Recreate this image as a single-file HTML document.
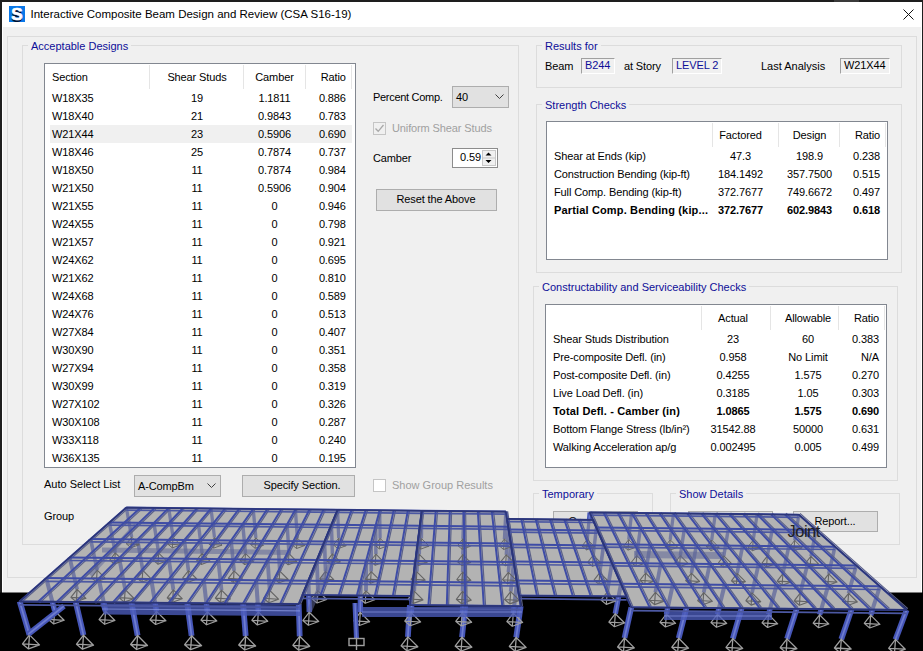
<!DOCTYPE html>
<html><head><meta charset="utf-8"><style>
html,body{margin:0;padding:0;}
body{width:923px;height:651px;position:relative;overflow:hidden;background:#1e1e1e;font-family:"Liberation Sans",sans-serif;font-size:11px;color:#000;}
div{white-space:pre;}
</style></head><body>
<div style="position:absolute;left:834px;top:0px;width:25px;height:2px;box-sizing:border-box;background:#3a3a3a"></div><div style="position:absolute;left:2px;top:2px;width:920px;height:26px;box-sizing:border-box;background:#fff"></div><div style="position:absolute;left:2px;top:27px;width:920px;height:566px;box-sizing:border-box;background:#f0f0f0;border-left:1px solid #fff;border-right:1px solid #fff"></div><div style="position:absolute;left:9px;top:6px;width:16px;height:16px;background:#0a78e8"></div><div style="position:absolute;left:-183.00px;top:5.11px;width:400px;line-height:19px;font-size:17px;letter-spacing:0px;text-align:center;color:#fff;font-weight:bold;text-shadow:0px 1.5px 0 #001030;-webkit-text-stroke:0.7px #fff">S</div><div style="position:absolute;left:30.50px;top:8.27px;width:400px;line-height:13.5px;font-size:11.5px;letter-spacing:0px;text-align:left;color:#000;">Interactive Composite Beam Design and Review (CSA S16-19)</div><svg style="position:absolute;left:903px;top:9px" width="11" height="11"><path d="M0.5 0.5 L10.5 10.5 M10.5 0.5 L0.5 10.5" stroke="#111" stroke-width="1"/></svg><div style="position:absolute;left:7px;top:36px;width:910px;height:542px;box-sizing:border-box;border:1px solid #dcdcdc"></div><div style="position:absolute;left:22px;top:45px;width:497px;height:500px;box-sizing:border-box;border:1px solid #dcdcdc"></div><div style="position:absolute;left:28px;top:39px;height:12px;padding:0 3px;background:#f0f0f0;"></div><div style="position:absolute;left:31.00px;top:39.69px;width:400px;line-height:13px;font-size:11px;letter-spacing:0px;text-align:left;color:#0e0e98;background:#f0f0f0;width:auto;padding-right:3px;margin-left:-2px;padding-left:2px">Acceptable Designs</div><div style="position:absolute;left:44px;top:63px;width:312px;height:405px;box-sizing:border-box;border:1px solid #828790;background:#fff"></div><div style="position:absolute;left:149px;top:65px;width:1px;height:24px;background:#e5e5e5"></div><div style="position:absolute;left:243px;top:65px;width:1px;height:24px;background:#e5e5e5"></div><div style="position:absolute;left:305px;top:65px;width:1px;height:24px;background:#e5e5e5"></div><div style="position:absolute;left:351px;top:65px;width:1px;height:24px;background:#e5e5e5"></div><div style="position:absolute;left:52.00px;top:70.69px;width:400px;line-height:13px;font-size:11px;letter-spacing:-0.12px;text-align:left;color:#000;">Section</div><div style="position:absolute;left:-3.00px;top:70.69px;width:400px;line-height:13px;font-size:11px;letter-spacing:-0.12px;text-align:center;color:#000;">Shear Studs</div><div style="position:absolute;left:74.50px;top:70.69px;width:400px;line-height:13px;font-size:11px;letter-spacing:-0.12px;text-align:center;color:#000;">Camber</div><div style="position:absolute;left:-54.20px;top:70.69px;width:400px;line-height:13px;font-size:11px;letter-spacing:-0.12px;text-align:right;color:#000;">Ratio</div><div style="position:absolute;left:50px;top:125px;width:302px;height:18px;box-sizing:border-box;background:#f0f0f0"></div><div style="position:absolute;left:52.00px;top:91.69px;width:400px;line-height:13px;font-size:11px;letter-spacing:-0.12px;text-align:left;color:#000;">W18X35</div><div style="position:absolute;left:-3.00px;top:91.69px;width:400px;line-height:13px;font-size:11px;letter-spacing:-0.12px;text-align:center;color:#000;">19</div><div style="position:absolute;left:74.50px;top:91.69px;width:400px;line-height:13px;font-size:11px;letter-spacing:-0.12px;text-align:center;color:#000;">1.1811</div><div style="position:absolute;left:-54.20px;top:91.69px;width:400px;line-height:13px;font-size:11px;letter-spacing:-0.12px;text-align:right;color:#000;">0.886</div><div style="position:absolute;left:52.00px;top:109.69px;width:400px;line-height:13px;font-size:11px;letter-spacing:-0.12px;text-align:left;color:#000;">W18X40</div><div style="position:absolute;left:-3.00px;top:109.69px;width:400px;line-height:13px;font-size:11px;letter-spacing:-0.12px;text-align:center;color:#000;">21</div><div style="position:absolute;left:74.50px;top:109.69px;width:400px;line-height:13px;font-size:11px;letter-spacing:-0.12px;text-align:center;color:#000;">0.9843</div><div style="position:absolute;left:-54.20px;top:109.69px;width:400px;line-height:13px;font-size:11px;letter-spacing:-0.12px;text-align:right;color:#000;">0.783</div><div style="position:absolute;left:52.00px;top:127.69px;width:400px;line-height:13px;font-size:11px;letter-spacing:-0.12px;text-align:left;color:#000;">W21X44</div><div style="position:absolute;left:-3.00px;top:127.69px;width:400px;line-height:13px;font-size:11px;letter-spacing:-0.12px;text-align:center;color:#000;">23</div><div style="position:absolute;left:74.50px;top:127.69px;width:400px;line-height:13px;font-size:11px;letter-spacing:-0.12px;text-align:center;color:#000;">0.5906</div><div style="position:absolute;left:-54.20px;top:127.69px;width:400px;line-height:13px;font-size:11px;letter-spacing:-0.12px;text-align:right;color:#000;">0.690</div><div style="position:absolute;left:52.00px;top:145.69px;width:400px;line-height:13px;font-size:11px;letter-spacing:-0.12px;text-align:left;color:#000;">W18X46</div><div style="position:absolute;left:-3.00px;top:145.69px;width:400px;line-height:13px;font-size:11px;letter-spacing:-0.12px;text-align:center;color:#000;">25</div><div style="position:absolute;left:74.50px;top:145.69px;width:400px;line-height:13px;font-size:11px;letter-spacing:-0.12px;text-align:center;color:#000;">0.7874</div><div style="position:absolute;left:-54.20px;top:145.69px;width:400px;line-height:13px;font-size:11px;letter-spacing:-0.12px;text-align:right;color:#000;">0.737</div><div style="position:absolute;left:52.00px;top:163.69px;width:400px;line-height:13px;font-size:11px;letter-spacing:-0.12px;text-align:left;color:#000;">W18X50</div><div style="position:absolute;left:-3.00px;top:163.69px;width:400px;line-height:13px;font-size:11px;letter-spacing:-0.12px;text-align:center;color:#000;">11</div><div style="position:absolute;left:74.50px;top:163.69px;width:400px;line-height:13px;font-size:11px;letter-spacing:-0.12px;text-align:center;color:#000;">0.7874</div><div style="position:absolute;left:-54.20px;top:163.69px;width:400px;line-height:13px;font-size:11px;letter-spacing:-0.12px;text-align:right;color:#000;">0.984</div><div style="position:absolute;left:52.00px;top:181.69px;width:400px;line-height:13px;font-size:11px;letter-spacing:-0.12px;text-align:left;color:#000;">W21X50</div><div style="position:absolute;left:-3.00px;top:181.69px;width:400px;line-height:13px;font-size:11px;letter-spacing:-0.12px;text-align:center;color:#000;">11</div><div style="position:absolute;left:74.50px;top:181.69px;width:400px;line-height:13px;font-size:11px;letter-spacing:-0.12px;text-align:center;color:#000;">0.5906</div><div style="position:absolute;left:-54.20px;top:181.69px;width:400px;line-height:13px;font-size:11px;letter-spacing:-0.12px;text-align:right;color:#000;">0.904</div><div style="position:absolute;left:52.00px;top:199.69px;width:400px;line-height:13px;font-size:11px;letter-spacing:-0.12px;text-align:left;color:#000;">W21X55</div><div style="position:absolute;left:-3.00px;top:199.69px;width:400px;line-height:13px;font-size:11px;letter-spacing:-0.12px;text-align:center;color:#000;">11</div><div style="position:absolute;left:74.50px;top:199.69px;width:400px;line-height:13px;font-size:11px;letter-spacing:-0.12px;text-align:center;color:#000;">0</div><div style="position:absolute;left:-54.20px;top:199.69px;width:400px;line-height:13px;font-size:11px;letter-spacing:-0.12px;text-align:right;color:#000;">0.946</div><div style="position:absolute;left:52.00px;top:217.69px;width:400px;line-height:13px;font-size:11px;letter-spacing:-0.12px;text-align:left;color:#000;">W24X55</div><div style="position:absolute;left:-3.00px;top:217.69px;width:400px;line-height:13px;font-size:11px;letter-spacing:-0.12px;text-align:center;color:#000;">11</div><div style="position:absolute;left:74.50px;top:217.69px;width:400px;line-height:13px;font-size:11px;letter-spacing:-0.12px;text-align:center;color:#000;">0</div><div style="position:absolute;left:-54.20px;top:217.69px;width:400px;line-height:13px;font-size:11px;letter-spacing:-0.12px;text-align:right;color:#000;">0.798</div><div style="position:absolute;left:52.00px;top:235.69px;width:400px;line-height:13px;font-size:11px;letter-spacing:-0.12px;text-align:left;color:#000;">W21X57</div><div style="position:absolute;left:-3.00px;top:235.69px;width:400px;line-height:13px;font-size:11px;letter-spacing:-0.12px;text-align:center;color:#000;">11</div><div style="position:absolute;left:74.50px;top:235.69px;width:400px;line-height:13px;font-size:11px;letter-spacing:-0.12px;text-align:center;color:#000;">0</div><div style="position:absolute;left:-54.20px;top:235.69px;width:400px;line-height:13px;font-size:11px;letter-spacing:-0.12px;text-align:right;color:#000;">0.921</div><div style="position:absolute;left:52.00px;top:253.69px;width:400px;line-height:13px;font-size:11px;letter-spacing:-0.12px;text-align:left;color:#000;">W24X62</div><div style="position:absolute;left:-3.00px;top:253.69px;width:400px;line-height:13px;font-size:11px;letter-spacing:-0.12px;text-align:center;color:#000;">11</div><div style="position:absolute;left:74.50px;top:253.69px;width:400px;line-height:13px;font-size:11px;letter-spacing:-0.12px;text-align:center;color:#000;">0</div><div style="position:absolute;left:-54.20px;top:253.69px;width:400px;line-height:13px;font-size:11px;letter-spacing:-0.12px;text-align:right;color:#000;">0.695</div><div style="position:absolute;left:52.00px;top:271.69px;width:400px;line-height:13px;font-size:11px;letter-spacing:-0.12px;text-align:left;color:#000;">W21X62</div><div style="position:absolute;left:-3.00px;top:271.69px;width:400px;line-height:13px;font-size:11px;letter-spacing:-0.12px;text-align:center;color:#000;">11</div><div style="position:absolute;left:74.50px;top:271.69px;width:400px;line-height:13px;font-size:11px;letter-spacing:-0.12px;text-align:center;color:#000;">0</div><div style="position:absolute;left:-54.20px;top:271.69px;width:400px;line-height:13px;font-size:11px;letter-spacing:-0.12px;text-align:right;color:#000;">0.810</div><div style="position:absolute;left:52.00px;top:289.69px;width:400px;line-height:13px;font-size:11px;letter-spacing:-0.12px;text-align:left;color:#000;">W24X68</div><div style="position:absolute;left:-3.00px;top:289.69px;width:400px;line-height:13px;font-size:11px;letter-spacing:-0.12px;text-align:center;color:#000;">11</div><div style="position:absolute;left:74.50px;top:289.69px;width:400px;line-height:13px;font-size:11px;letter-spacing:-0.12px;text-align:center;color:#000;">0</div><div style="position:absolute;left:-54.20px;top:289.69px;width:400px;line-height:13px;font-size:11px;letter-spacing:-0.12px;text-align:right;color:#000;">0.589</div><div style="position:absolute;left:52.00px;top:307.69px;width:400px;line-height:13px;font-size:11px;letter-spacing:-0.12px;text-align:left;color:#000;">W24X76</div><div style="position:absolute;left:-3.00px;top:307.69px;width:400px;line-height:13px;font-size:11px;letter-spacing:-0.12px;text-align:center;color:#000;">11</div><div style="position:absolute;left:74.50px;top:307.69px;width:400px;line-height:13px;font-size:11px;letter-spacing:-0.12px;text-align:center;color:#000;">0</div><div style="position:absolute;left:-54.20px;top:307.69px;width:400px;line-height:13px;font-size:11px;letter-spacing:-0.12px;text-align:right;color:#000;">0.513</div><div style="position:absolute;left:52.00px;top:325.69px;width:400px;line-height:13px;font-size:11px;letter-spacing:-0.12px;text-align:left;color:#000;">W27X84</div><div style="position:absolute;left:-3.00px;top:325.69px;width:400px;line-height:13px;font-size:11px;letter-spacing:-0.12px;text-align:center;color:#000;">11</div><div style="position:absolute;left:74.50px;top:325.69px;width:400px;line-height:13px;font-size:11px;letter-spacing:-0.12px;text-align:center;color:#000;">0</div><div style="position:absolute;left:-54.20px;top:325.69px;width:400px;line-height:13px;font-size:11px;letter-spacing:-0.12px;text-align:right;color:#000;">0.407</div><div style="position:absolute;left:52.00px;top:343.69px;width:400px;line-height:13px;font-size:11px;letter-spacing:-0.12px;text-align:left;color:#000;">W30X90</div><div style="position:absolute;left:-3.00px;top:343.69px;width:400px;line-height:13px;font-size:11px;letter-spacing:-0.12px;text-align:center;color:#000;">11</div><div style="position:absolute;left:74.50px;top:343.69px;width:400px;line-height:13px;font-size:11px;letter-spacing:-0.12px;text-align:center;color:#000;">0</div><div style="position:absolute;left:-54.20px;top:343.69px;width:400px;line-height:13px;font-size:11px;letter-spacing:-0.12px;text-align:right;color:#000;">0.351</div><div style="position:absolute;left:52.00px;top:361.69px;width:400px;line-height:13px;font-size:11px;letter-spacing:-0.12px;text-align:left;color:#000;">W27X94</div><div style="position:absolute;left:-3.00px;top:361.69px;width:400px;line-height:13px;font-size:11px;letter-spacing:-0.12px;text-align:center;color:#000;">11</div><div style="position:absolute;left:74.50px;top:361.69px;width:400px;line-height:13px;font-size:11px;letter-spacing:-0.12px;text-align:center;color:#000;">0</div><div style="position:absolute;left:-54.20px;top:361.69px;width:400px;line-height:13px;font-size:11px;letter-spacing:-0.12px;text-align:right;color:#000;">0.358</div><div style="position:absolute;left:52.00px;top:379.69px;width:400px;line-height:13px;font-size:11px;letter-spacing:-0.12px;text-align:left;color:#000;">W30X99</div><div style="position:absolute;left:-3.00px;top:379.69px;width:400px;line-height:13px;font-size:11px;letter-spacing:-0.12px;text-align:center;color:#000;">11</div><div style="position:absolute;left:74.50px;top:379.69px;width:400px;line-height:13px;font-size:11px;letter-spacing:-0.12px;text-align:center;color:#000;">0</div><div style="position:absolute;left:-54.20px;top:379.69px;width:400px;line-height:13px;font-size:11px;letter-spacing:-0.12px;text-align:right;color:#000;">0.319</div><div style="position:absolute;left:52.00px;top:397.69px;width:400px;line-height:13px;font-size:11px;letter-spacing:-0.12px;text-align:left;color:#000;">W27X102</div><div style="position:absolute;left:-3.00px;top:397.69px;width:400px;line-height:13px;font-size:11px;letter-spacing:-0.12px;text-align:center;color:#000;">11</div><div style="position:absolute;left:74.50px;top:397.69px;width:400px;line-height:13px;font-size:11px;letter-spacing:-0.12px;text-align:center;color:#000;">0</div><div style="position:absolute;left:-54.20px;top:397.69px;width:400px;line-height:13px;font-size:11px;letter-spacing:-0.12px;text-align:right;color:#000;">0.326</div><div style="position:absolute;left:52.00px;top:415.69px;width:400px;line-height:13px;font-size:11px;letter-spacing:-0.12px;text-align:left;color:#000;">W30X108</div><div style="position:absolute;left:-3.00px;top:415.69px;width:400px;line-height:13px;font-size:11px;letter-spacing:-0.12px;text-align:center;color:#000;">11</div><div style="position:absolute;left:74.50px;top:415.69px;width:400px;line-height:13px;font-size:11px;letter-spacing:-0.12px;text-align:center;color:#000;">0</div><div style="position:absolute;left:-54.20px;top:415.69px;width:400px;line-height:13px;font-size:11px;letter-spacing:-0.12px;text-align:right;color:#000;">0.287</div><div style="position:absolute;left:52.00px;top:433.69px;width:400px;line-height:13px;font-size:11px;letter-spacing:-0.12px;text-align:left;color:#000;">W33X118</div><div style="position:absolute;left:-3.00px;top:433.69px;width:400px;line-height:13px;font-size:11px;letter-spacing:-0.12px;text-align:center;color:#000;">11</div><div style="position:absolute;left:74.50px;top:433.69px;width:400px;line-height:13px;font-size:11px;letter-spacing:-0.12px;text-align:center;color:#000;">0</div><div style="position:absolute;left:-54.20px;top:433.69px;width:400px;line-height:13px;font-size:11px;letter-spacing:-0.12px;text-align:right;color:#000;">0.240</div><div style="position:absolute;left:52.00px;top:451.69px;width:400px;line-height:13px;font-size:11px;letter-spacing:-0.12px;text-align:left;color:#000;">W36X135</div><div style="position:absolute;left:-3.00px;top:451.69px;width:400px;line-height:13px;font-size:11px;letter-spacing:-0.12px;text-align:center;color:#000;">11</div><div style="position:absolute;left:74.50px;top:451.69px;width:400px;line-height:13px;font-size:11px;letter-spacing:-0.12px;text-align:center;color:#000;">0</div><div style="position:absolute;left:-54.20px;top:451.69px;width:400px;line-height:13px;font-size:11px;letter-spacing:-0.12px;text-align:right;color:#000;">0.195</div><div style="position:absolute;left:373.00px;top:90.69px;width:400px;line-height:13px;font-size:11px;letter-spacing:-0.3px;text-align:left;color:#000;">Percent Comp.</div><div style="position:absolute;left:452px;top:86px;width:57px;height:22px;box-sizing:border-box;border:1px solid #adadad;background:#e1e1e1"></div><div style="position:absolute;left:456.00px;top:90.69px;width:400px;line-height:13px;font-size:11px;letter-spacing:-0.12px;text-align:left;color:#000;">40</div><svg style="position:absolute;left:494.5px;top:94.0px" width="10" height="6"><path d="M0.5 0.5 L4.5 4.5 L8.5 0.5" fill="none" stroke="#404040" stroke-width="1"/></svg><div style="position:absolute;left:373px;top:122px;width:13px;height:13px;box-sizing:border-box;border:1px solid #c5c5c5;background:#f0f0f0"></div><svg style="position:absolute;left:373px;top:122px" width="13" height="13"><path d="M2.5 6.5 L5.2 9.3 L10.5 3" fill="none" stroke="#a8a8a8" stroke-width="1.3"/></svg><div style="position:absolute;left:392.00px;top:121.69px;width:400px;line-height:13px;font-size:11px;letter-spacing:-0.12px;text-align:left;color:#a0a0a0;">Uniform Shear Studs</div><div style="position:absolute;left:373.00px;top:151.69px;width:400px;line-height:13px;font-size:11px;letter-spacing:-0.12px;text-align:left;color:#000;">Camber</div><div style="position:absolute;left:452px;top:148px;width:46px;height:20px;box-sizing:border-box;border:1px solid #8c8c8c;background:#fff"></div><div style="position:absolute;left:81.00px;top:151.19px;width:400px;line-height:13px;font-size:11px;letter-spacing:-0.12px;text-align:right;color:#000;">0.59</div><div style="position:absolute;left:482px;top:150px;width:14px;height:16px;box-sizing:border-box;border:1px solid #c8c8c8;background:#f0f0f0"></div><svg style="position:absolute;left:482px;top:150px" width="14" height="16"><path d="M3.5 5.5 L6.5 2.5 L9.5 5.5 Z M3.5 10 L6.5 13 L9.5 10 Z" fill="#000"/><path d="M1 8 L13 8" stroke="#c8c8c8"/></svg><div style="position:absolute;left:376px;top:189px;width:121px;height:22px;box-sizing:border-box;border:1px solid #adadad;background:#e1e1e1"></div><div style="position:absolute;left:236.00px;top:193.19px;width:400px;line-height:13px;font-size:11px;letter-spacing:-0.12px;text-align:center;color:#000;">Reset the Above</div><div style="position:absolute;left:44.00px;top:477.69px;width:400px;line-height:13px;font-size:11px;letter-spacing:0px;text-align:left;color:#000;">Auto Select List</div><div style="position:absolute;left:134px;top:475px;width:87px;height:22px;box-sizing:border-box;border:1px solid #adadad;background:#e1e1e1"></div><div style="position:absolute;left:138.00px;top:479.69px;width:400px;line-height:13px;font-size:11px;letter-spacing:-0.12px;text-align:left;color:#000;">A-CompBm</div><svg style="position:absolute;left:206.5px;top:483.0px" width="10" height="6"><path d="M0.5 0.5 L4.5 4.5 L8.5 0.5" fill="none" stroke="#404040" stroke-width="1"/></svg><div style="position:absolute;left:242px;top:475px;width:113px;height:22px;box-sizing:border-box;border:1px solid #adadad;background:#e1e1e1"></div><div style="position:absolute;left:102.00px;top:479.19px;width:400px;line-height:13px;font-size:11px;letter-spacing:-0.12px;text-align:center;color:#000;">Specify Section.</div><div style="position:absolute;left:373px;top:479px;width:13px;height:13px;box-sizing:border-box;border:1px solid #c5c5c5;background:#fff"></div><div style="position:absolute;left:392.00px;top:478.69px;width:400px;line-height:13px;font-size:11px;letter-spacing:0px;text-align:left;color:#a0a0a0;">Show Group Results</div><div style="position:absolute;left:44.00px;top:509.69px;width:400px;line-height:13px;font-size:11px;letter-spacing:-0.12px;text-align:left;color:#000;">Group</div><div style="position:absolute;left:536px;top:45px;width:366px;height:43px;box-sizing:border-box;border:1px solid #dcdcdc"></div><div style="position:absolute;left:542px;top:39px;height:12px;padding:0 3px;background:#f0f0f0;"></div><div style="position:absolute;left:545.00px;top:39.69px;width:400px;line-height:13px;font-size:11px;letter-spacing:0px;text-align:left;color:#0e0e98;background:#f0f0f0;width:auto;padding-right:3px;margin-left:-2px;padding-left:2px">Results for</div><div style="position:absolute;left:545.00px;top:59.69px;width:400px;line-height:13px;font-size:11px;letter-spacing:-0.12px;text-align:left;color:#000;">Beam</div><div style="position:absolute;left:581px;top:58px;width:34px;height:16px;box-sizing:border-box;border-top:1px solid #a0a0a0;border-left:1px solid #a0a0a0;border-right:1px solid #fff;border-bottom:1px solid #fff;background:#f0f0f0"></div><div style="position:absolute;left:585.00px;top:58.69px;width:400px;line-height:13px;font-size:11px;letter-spacing:-0.12px;text-align:left;color:#0e0e98;">B244</div><div style="position:absolute;left:624.00px;top:59.69px;width:400px;line-height:13px;font-size:11px;letter-spacing:-0.12px;text-align:left;color:#000;">at Story</div><div style="position:absolute;left:672px;top:58px;width:50px;height:16px;box-sizing:border-box;border-top:1px solid #a0a0a0;border-left:1px solid #a0a0a0;border-right:1px solid #fff;border-bottom:1px solid #fff;background:#f0f0f0"></div><div style="position:absolute;left:676.00px;top:58.69px;width:400px;line-height:13px;font-size:11px;letter-spacing:-0.12px;text-align:left;color:#0e0e98;">LEVEL 2</div><div style="position:absolute;left:761.00px;top:59.69px;width:400px;line-height:13px;font-size:11px;letter-spacing:0px;text-align:left;color:#000;">Last Analysis</div><div style="position:absolute;left:840px;top:58px;width:50px;height:16px;box-sizing:border-box;border-top:1px solid #a0a0a0;border-left:1px solid #a0a0a0;border-right:1px solid #fff;border-bottom:1px solid #fff;background:#f0f0f0"></div><div style="position:absolute;left:844.00px;top:58.69px;width:400px;line-height:13px;font-size:11px;letter-spacing:-0.12px;text-align:left;color:#000;">W21X44</div><div style="position:absolute;left:536px;top:104px;width:366px;height:169px;box-sizing:border-box;border:1px solid #dcdcdc"></div><div style="position:absolute;left:542px;top:98px;height:12px;padding:0 3px;background:#f0f0f0;"></div><div style="position:absolute;left:545.00px;top:98.69px;width:400px;line-height:13px;font-size:11px;letter-spacing:0px;text-align:left;color:#0e0e98;background:#f0f0f0;width:auto;padding-right:3px;margin-left:-2px;padding-left:2px">Strength Checks</div><div style="position:absolute;left:546px;top:121px;width:342px;height:139px;box-sizing:border-box;border:1px solid #828790;background:#fff"></div><div style="position:absolute;left:712px;top:123px;width:1px;height:24px;background:#e5e5e5"></div><div style="position:absolute;left:778px;top:123px;width:1px;height:24px;background:#e5e5e5"></div><div style="position:absolute;left:839px;top:123px;width:1px;height:24px;background:#e5e5e5"></div><div style="position:absolute;left:885px;top:123px;width:1px;height:24px;background:#e5e5e5"></div><div style="position:absolute;left:540.50px;top:128.69px;width:400px;line-height:13px;font-size:11px;letter-spacing:-0.12px;text-align:center;color:#000;">Factored</div><div style="position:absolute;left:609.50px;top:128.69px;width:400px;line-height:13px;font-size:11px;letter-spacing:-0.12px;text-align:center;color:#000;">Design</div><div style="position:absolute;left:480.00px;top:128.69px;width:400px;line-height:13px;font-size:11px;letter-spacing:-0.12px;text-align:right;color:#000;">Ratio</div><div style="position:absolute;left:554.00px;top:149.69px;width:400px;line-height:13px;font-size:11px;letter-spacing:-0.12px;text-align:left;color:#000;">Shear at Ends (kip)</div><div style="position:absolute;left:540.50px;top:149.69px;width:400px;line-height:13px;font-size:11px;letter-spacing:-0.12px;text-align:center;color:#000;">47.3</div><div style="position:absolute;left:609.50px;top:149.69px;width:400px;line-height:13px;font-size:11px;letter-spacing:-0.12px;text-align:center;color:#000;">198.9</div><div style="position:absolute;left:480.00px;top:149.69px;width:400px;line-height:13px;font-size:11px;letter-spacing:-0.12px;text-align:right;color:#000;">0.238</div><div style="position:absolute;left:554.00px;top:167.69px;width:400px;line-height:13px;font-size:11px;letter-spacing:-0.12px;text-align:left;color:#000;">Construction Bending (kip-ft)</div><div style="position:absolute;left:540.50px;top:167.69px;width:400px;line-height:13px;font-size:11px;letter-spacing:-0.12px;text-align:center;color:#000;">184.1492</div><div style="position:absolute;left:609.50px;top:167.69px;width:400px;line-height:13px;font-size:11px;letter-spacing:-0.12px;text-align:center;color:#000;">357.7500</div><div style="position:absolute;left:480.00px;top:167.69px;width:400px;line-height:13px;font-size:11px;letter-spacing:-0.12px;text-align:right;color:#000;">0.515</div><div style="position:absolute;left:554.00px;top:185.69px;width:400px;line-height:13px;font-size:11px;letter-spacing:-0.12px;text-align:left;color:#000;">Full Comp. Bending (kip-ft)</div><div style="position:absolute;left:540.50px;top:185.69px;width:400px;line-height:13px;font-size:11px;letter-spacing:-0.12px;text-align:center;color:#000;">372.7677</div><div style="position:absolute;left:609.50px;top:185.69px;width:400px;line-height:13px;font-size:11px;letter-spacing:-0.12px;text-align:center;color:#000;">749.6672</div><div style="position:absolute;left:480.00px;top:185.69px;width:400px;line-height:13px;font-size:11px;letter-spacing:-0.12px;text-align:right;color:#000;">0.497</div><div style="position:absolute;left:554.00px;top:203.69px;width:400px;line-height:13px;font-size:11px;letter-spacing:0.15px;text-align:left;color:#000;font-weight:bold;">Partial Comp. Bending (kip...</div><div style="position:absolute;left:540.50px;top:203.69px;width:400px;line-height:13px;font-size:11px;letter-spacing:-0.12px;text-align:center;color:#000;font-weight:bold;">372.7677</div><div style="position:absolute;left:609.50px;top:203.69px;width:400px;line-height:13px;font-size:11px;letter-spacing:-0.12px;text-align:center;color:#000;font-weight:bold;">602.9843</div><div style="position:absolute;left:480.00px;top:203.69px;width:400px;line-height:13px;font-size:11px;letter-spacing:-0.12px;text-align:right;color:#000;font-weight:bold;">0.618</div><div style="position:absolute;left:533px;top:286px;width:365px;height:195px;box-sizing:border-box;border:1px solid #dcdcdc"></div><div style="position:absolute;left:539px;top:280px;height:12px;padding:0 3px;background:#f0f0f0;"></div><div style="position:absolute;left:542.00px;top:280.69px;width:400px;line-height:13px;font-size:11px;letter-spacing:0px;text-align:left;color:#0e0e98;background:#f0f0f0;width:auto;padding-right:3px;margin-left:-2px;padding-left:2px">Constructability and Serviceability Checks</div><div style="position:absolute;left:545px;top:304px;width:342px;height:164px;box-sizing:border-box;border:1px solid #828790;background:#fff"></div><div style="position:absolute;left:701px;top:306px;width:1px;height:24px;background:#e5e5e5"></div><div style="position:absolute;left:770px;top:306px;width:1px;height:24px;background:#e5e5e5"></div><div style="position:absolute;left:838px;top:306px;width:1px;height:24px;background:#e5e5e5"></div><div style="position:absolute;left:884px;top:306px;width:1px;height:24px;background:#e5e5e5"></div><div style="position:absolute;left:533.00px;top:311.69px;width:400px;line-height:13px;font-size:11px;letter-spacing:-0.12px;text-align:center;color:#000;">Actual</div><div style="position:absolute;left:608.00px;top:311.69px;width:400px;line-height:13px;font-size:11px;letter-spacing:-0.12px;text-align:center;color:#000;">Allowable</div><div style="position:absolute;left:479.00px;top:311.69px;width:400px;line-height:13px;font-size:11px;letter-spacing:-0.12px;text-align:right;color:#000;">Ratio</div><div style="position:absolute;left:553.00px;top:332.69px;width:400px;line-height:13px;font-size:11px;letter-spacing:-0.12px;text-align:left;color:#000;">Shear Studs Distribution</div><div style="position:absolute;left:533.00px;top:332.69px;width:400px;line-height:13px;font-size:11px;letter-spacing:-0.12px;text-align:center;color:#000;">23</div><div style="position:absolute;left:608.00px;top:332.69px;width:400px;line-height:13px;font-size:11px;letter-spacing:-0.12px;text-align:center;color:#000;">60</div><div style="position:absolute;left:479.00px;top:332.69px;width:400px;line-height:13px;font-size:11px;letter-spacing:-0.12px;text-align:right;color:#000;">0.383</div><div style="position:absolute;left:553.00px;top:350.69px;width:400px;line-height:13px;font-size:11px;letter-spacing:-0.12px;text-align:left;color:#000;">Pre-composite Defl. (in)</div><div style="position:absolute;left:533.00px;top:350.69px;width:400px;line-height:13px;font-size:11px;letter-spacing:-0.12px;text-align:center;color:#000;">0.958</div><div style="position:absolute;left:608.00px;top:350.69px;width:400px;line-height:13px;font-size:11px;letter-spacing:-0.12px;text-align:center;color:#000;">No Limit</div><div style="position:absolute;left:479.00px;top:350.69px;width:400px;line-height:13px;font-size:11px;letter-spacing:-0.12px;text-align:right;color:#000;">N/A</div><div style="position:absolute;left:553.00px;top:368.69px;width:400px;line-height:13px;font-size:11px;letter-spacing:-0.12px;text-align:left;color:#000;">Post-composite Defl. (in)</div><div style="position:absolute;left:533.00px;top:368.69px;width:400px;line-height:13px;font-size:11px;letter-spacing:-0.12px;text-align:center;color:#000;">0.4255</div><div style="position:absolute;left:608.00px;top:368.69px;width:400px;line-height:13px;font-size:11px;letter-spacing:-0.12px;text-align:center;color:#000;">1.575</div><div style="position:absolute;left:479.00px;top:368.69px;width:400px;line-height:13px;font-size:11px;letter-spacing:-0.12px;text-align:right;color:#000;">0.270</div><div style="position:absolute;left:553.00px;top:386.69px;width:400px;line-height:13px;font-size:11px;letter-spacing:-0.12px;text-align:left;color:#000;">Live Load Defl. (in)</div><div style="position:absolute;left:533.00px;top:386.69px;width:400px;line-height:13px;font-size:11px;letter-spacing:-0.12px;text-align:center;color:#000;">0.3185</div><div style="position:absolute;left:608.00px;top:386.69px;width:400px;line-height:13px;font-size:11px;letter-spacing:-0.12px;text-align:center;color:#000;">1.05</div><div style="position:absolute;left:479.00px;top:386.69px;width:400px;line-height:13px;font-size:11px;letter-spacing:-0.12px;text-align:right;color:#000;">0.303</div><div style="position:absolute;left:553.00px;top:404.69px;width:400px;line-height:13px;font-size:11px;letter-spacing:0.15px;text-align:left;color:#000;font-weight:bold;">Total Defl. - Camber (in)</div><div style="position:absolute;left:533.00px;top:404.69px;width:400px;line-height:13px;font-size:11px;letter-spacing:-0.12px;text-align:center;color:#000;font-weight:bold;">1.0865</div><div style="position:absolute;left:608.00px;top:404.69px;width:400px;line-height:13px;font-size:11px;letter-spacing:-0.12px;text-align:center;color:#000;font-weight:bold;">1.575</div><div style="position:absolute;left:479.00px;top:404.69px;width:400px;line-height:13px;font-size:11px;letter-spacing:-0.12px;text-align:right;color:#000;font-weight:bold;">0.690</div><div style="position:absolute;left:553.00px;top:422.69px;width:400px;line-height:13px;font-size:11px;letter-spacing:-0.12px;text-align:left;color:#000;">Bottom Flange Stress (lb/in&sup2;)</div><div style="position:absolute;left:533.00px;top:422.69px;width:400px;line-height:13px;font-size:11px;letter-spacing:-0.12px;text-align:center;color:#000;">31542.88</div><div style="position:absolute;left:608.00px;top:422.69px;width:400px;line-height:13px;font-size:11px;letter-spacing:-0.12px;text-align:center;color:#000;">50000</div><div style="position:absolute;left:479.00px;top:422.69px;width:400px;line-height:13px;font-size:11px;letter-spacing:-0.12px;text-align:right;color:#000;">0.631</div><div style="position:absolute;left:553.00px;top:440.69px;width:400px;line-height:13px;font-size:11px;letter-spacing:-0.12px;text-align:left;color:#000;">Walking Acceleration ap/g</div><div style="position:absolute;left:533.00px;top:440.69px;width:400px;line-height:13px;font-size:11px;letter-spacing:-0.12px;text-align:center;color:#000;">0.002495</div><div style="position:absolute;left:608.00px;top:440.69px;width:400px;line-height:13px;font-size:11px;letter-spacing:-0.12px;text-align:center;color:#000;">0.005</div><div style="position:absolute;left:479.00px;top:440.69px;width:400px;line-height:13px;font-size:11px;letter-spacing:-0.12px;text-align:right;color:#000;">0.499</div><div style="position:absolute;left:533px;top:493px;width:120px;height:78px;box-sizing:border-box;border:1px solid #dcdcdc"></div><div style="position:absolute;left:539px;top:487px;height:12px;padding:0 3px;background:#f0f0f0;"></div><div style="position:absolute;left:542.00px;top:487.69px;width:400px;line-height:13px;font-size:11px;letter-spacing:0px;text-align:left;color:#0e0e98;background:#f0f0f0;width:auto;padding-right:3px;margin-left:-2px;padding-left:2px">Temporary</div><div style="position:absolute;left:670px;top:493px;width:230px;height:52px;box-sizing:border-box;border:1px solid #dcdcdc"></div><div style="position:absolute;left:676px;top:487px;height:12px;padding:0 3px;background:#f0f0f0;"></div><div style="position:absolute;left:679.00px;top:487.69px;width:400px;line-height:13px;font-size:11px;letter-spacing:0px;text-align:left;color:#0e0e98;background:#f0f0f0;width:auto;padding-right:3px;margin-left:-2px;padding-left:2px">Show Details</div><div style="position:absolute;left:553px;top:511px;width:85px;height:21px;box-sizing:border-box;border:1px solid #adadad;background:#e1e1e1"></div><div style="position:absolute;left:395.00px;top:514.69px;width:400px;line-height:13px;font-size:11px;letter-spacing:-0.12px;text-align:center;color:#000;">Compare...</div><div style="position:absolute;left:688px;top:511px;width:85px;height:21px;box-sizing:border-box;border:1px solid #adadad;background:#e1e1e1"></div><div style="position:absolute;left:530.00px;top:514.69px;width:400px;line-height:13px;font-size:11px;letter-spacing:-0.12px;text-align:center;color:#000;">Summary...</div><div style="position:absolute;left:793px;top:511px;width:85px;height:21px;box-sizing:border-box;border:1px solid #adadad;background:#e1e1e1"></div><div style="position:absolute;left:635.00px;top:514.69px;width:400px;line-height:13px;font-size:11px;letter-spacing:-0.12px;text-align:center;color:#000;">Report...</div>
<svg width="923" height="651" style="position:absolute;left:0;top:0">
<rect x="0" y="592.5" width="923" height="59" fill="#000"/>
<line x1="19.7" y1="601.4" x2="29.5" y2="634.9" stroke="#4656b8" stroke-width="5.80"/>
<line x1="19.7" y1="601.4" x2="29.5" y2="634.9" stroke="#8a98e0" stroke-width="1.74" stroke-opacity="0.6"/>
<line x1="46.2" y1="578.1" x2="54.7" y2="610.9" stroke="#4656b8" stroke-width="5.45"/>
<line x1="46.2" y1="578.1" x2="54.7" y2="610.9" stroke="#8a98e0" stroke-width="1.63" stroke-opacity="0.6"/>
<line x1="69.6" y1="557.5" x2="77.1" y2="589.4" stroke="#4656b8" stroke-width="5.14"/>
<line x1="69.6" y1="557.5" x2="77.1" y2="589.4" stroke="#8a98e0" stroke-width="1.54" stroke-opacity="0.6"/>
<line x1="90.6" y1="539.1" x2="97.2" y2="570.2" stroke="#4656b8" stroke-width="4.86"/>
<line x1="90.6" y1="539.1" x2="97.2" y2="570.2" stroke="#8a98e0" stroke-width="1.46" stroke-opacity="0.6"/>
<line x1="109.4" y1="522.5" x2="115.3" y2="552.9" stroke="#4656b8" stroke-width="4.61"/>
<line x1="109.4" y1="522.5" x2="115.3" y2="552.9" stroke="#8a98e0" stroke-width="1.38" stroke-opacity="0.6"/>
<line x1="126.3" y1="507.6" x2="131.7" y2="537.1" stroke="#4656b8" stroke-width="4.39"/>
<line x1="126.3" y1="507.6" x2="131.7" y2="537.1" stroke="#8a98e0" stroke-width="1.32" stroke-opacity="0.6"/>
<line x1="75.7" y1="601.9" x2="83.5" y2="635.2" stroke="#4656b8" stroke-width="5.79"/>
<line x1="75.7" y1="601.9" x2="83.5" y2="635.2" stroke="#8a98e0" stroke-width="1.74" stroke-opacity="0.6"/>
<line x1="98.7" y1="578.6" x2="105.6" y2="611.1" stroke="#4656b8" stroke-width="5.44"/>
<line x1="98.7" y1="578.6" x2="105.6" y2="611.1" stroke="#8a98e0" stroke-width="1.63" stroke-opacity="0.6"/>
<line x1="119.2" y1="558.0" x2="125.2" y2="589.7" stroke="#4656b8" stroke-width="5.13"/>
<line x1="119.2" y1="558.0" x2="125.2" y2="589.7" stroke="#8a98e0" stroke-width="1.54" stroke-opacity="0.6"/>
<line x1="137.5" y1="539.5" x2="142.8" y2="570.4" stroke="#4656b8" stroke-width="4.85"/>
<line x1="137.5" y1="539.5" x2="142.8" y2="570.4" stroke="#8a98e0" stroke-width="1.46" stroke-opacity="0.6"/>
<line x1="153.9" y1="523.0" x2="158.7" y2="553.1" stroke="#4656b8" stroke-width="4.61"/>
<line x1="153.9" y1="523.0" x2="158.7" y2="553.1" stroke="#8a98e0" stroke-width="1.38" stroke-opacity="0.6"/>
<line x1="168.7" y1="508.0" x2="173.1" y2="537.3" stroke="#4656b8" stroke-width="4.38"/>
<line x1="168.7" y1="508.0" x2="173.1" y2="537.3" stroke="#8a98e0" stroke-width="1.31" stroke-opacity="0.6"/>
<line x1="131.5" y1="602.5" x2="137.6" y2="635.5" stroke="#4656b8" stroke-width="5.78"/>
<line x1="131.5" y1="602.5" x2="137.6" y2="635.5" stroke="#8a98e0" stroke-width="1.74" stroke-opacity="0.6"/>
<line x1="151.2" y1="579.1" x2="156.5" y2="611.4" stroke="#4656b8" stroke-width="5.43"/>
<line x1="151.2" y1="579.1" x2="156.5" y2="611.4" stroke="#8a98e0" stroke-width="1.63" stroke-opacity="0.6"/>
<line x1="168.7" y1="558.5" x2="173.4" y2="589.9" stroke="#4656b8" stroke-width="5.13"/>
<line x1="168.7" y1="558.5" x2="173.4" y2="589.9" stroke="#8a98e0" stroke-width="1.54" stroke-opacity="0.6"/>
<line x1="184.3" y1="540.0" x2="188.5" y2="570.7" stroke="#4656b8" stroke-width="4.85"/>
<line x1="184.3" y1="540.0" x2="188.5" y2="570.7" stroke="#8a98e0" stroke-width="1.45" stroke-opacity="0.6"/>
<line x1="198.3" y1="523.4" x2="202.1" y2="553.3" stroke="#4656b8" stroke-width="4.60"/>
<line x1="198.3" y1="523.4" x2="202.1" y2="553.3" stroke="#8a98e0" stroke-width="1.38" stroke-opacity="0.6"/>
<line x1="211.0" y1="508.5" x2="214.5" y2="537.6" stroke="#4656b8" stroke-width="4.38"/>
<line x1="211.0" y1="508.5" x2="214.5" y2="537.6" stroke="#8a98e0" stroke-width="1.31" stroke-opacity="0.6"/>
<line x1="187.3" y1="603.0" x2="191.6" y2="635.8" stroke="#4656b8" stroke-width="5.78"/>
<line x1="187.3" y1="603.0" x2="191.6" y2="635.8" stroke="#8a98e0" stroke-width="1.73" stroke-opacity="0.6"/>
<line x1="203.7" y1="579.7" x2="207.4" y2="611.7" stroke="#4656b8" stroke-width="5.43"/>
<line x1="203.7" y1="579.7" x2="207.4" y2="611.7" stroke="#8a98e0" stroke-width="1.63" stroke-opacity="0.6"/>
<line x1="218.2" y1="559.0" x2="221.5" y2="590.2" stroke="#4656b8" stroke-width="5.12"/>
<line x1="218.2" y1="559.0" x2="221.5" y2="590.2" stroke="#8a98e0" stroke-width="1.54" stroke-opacity="0.6"/>
<line x1="231.1" y1="540.5" x2="234.1" y2="570.9" stroke="#4656b8" stroke-width="4.84"/>
<line x1="231.1" y1="540.5" x2="234.1" y2="570.9" stroke="#8a98e0" stroke-width="1.45" stroke-opacity="0.6"/>
<line x1="242.7" y1="523.9" x2="245.5" y2="553.5" stroke="#4656b8" stroke-width="4.60"/>
<line x1="242.7" y1="523.9" x2="245.5" y2="553.5" stroke="#8a98e0" stroke-width="1.38" stroke-opacity="0.6"/>
<line x1="253.2" y1="508.9" x2="255.9" y2="537.8" stroke="#4656b8" stroke-width="4.37"/>
<line x1="253.2" y1="508.9" x2="255.9" y2="537.8" stroke="#8a98e0" stroke-width="1.31" stroke-opacity="0.6"/>
<line x1="243.1" y1="603.5" x2="245.7" y2="636.1" stroke="#4656b8" stroke-width="5.77"/>
<line x1="243.1" y1="603.5" x2="245.7" y2="636.1" stroke="#8a98e0" stroke-width="1.73" stroke-opacity="0.6"/>
<line x1="256.1" y1="580.2" x2="258.4" y2="611.9" stroke="#4656b8" stroke-width="5.42"/>
<line x1="256.1" y1="580.2" x2="258.4" y2="611.9" stroke="#8a98e0" stroke-width="1.63" stroke-opacity="0.6"/>
<line x1="267.6" y1="559.5" x2="269.7" y2="590.4" stroke="#4656b8" stroke-width="5.11"/>
<line x1="267.6" y1="559.5" x2="269.7" y2="590.4" stroke="#8a98e0" stroke-width="1.53" stroke-opacity="0.6"/>
<line x1="277.8" y1="541.0" x2="279.8" y2="571.1" stroke="#4656b8" stroke-width="4.84"/>
<line x1="277.8" y1="541.0" x2="279.8" y2="571.1" stroke="#8a98e0" stroke-width="1.45" stroke-opacity="0.6"/>
<line x1="287.1" y1="524.4" x2="289.0" y2="553.7" stroke="#4656b8" stroke-width="4.59"/>
<line x1="287.1" y1="524.4" x2="289.0" y2="553.7" stroke="#8a98e0" stroke-width="1.38" stroke-opacity="0.6"/>
<line x1="295.4" y1="509.4" x2="297.3" y2="538.0" stroke="#4656b8" stroke-width="4.37"/>
<line x1="295.4" y1="509.4" x2="297.3" y2="538.0" stroke="#8a98e0" stroke-width="1.31" stroke-opacity="0.6"/>
<line x1="298.7" y1="604.1" x2="299.7" y2="636.3" stroke="#4656b8" stroke-width="5.76"/>
<line x1="298.7" y1="604.1" x2="299.7" y2="636.3" stroke="#8a98e0" stroke-width="1.73" stroke-opacity="0.6"/>
<line x1="308.4" y1="580.7" x2="309.3" y2="612.2" stroke="#4656b8" stroke-width="5.42"/>
<line x1="308.4" y1="580.7" x2="309.3" y2="612.2" stroke="#8a98e0" stroke-width="1.62" stroke-opacity="0.6"/>
<line x1="316.9" y1="560.0" x2="317.9" y2="590.6" stroke="#4656b8" stroke-width="5.11"/>
<line x1="316.9" y1="560.0" x2="317.9" y2="590.6" stroke="#8a98e0" stroke-width="1.53" stroke-opacity="0.6"/>
<line x1="324.5" y1="541.5" x2="325.5" y2="571.3" stroke="#4656b8" stroke-width="4.83"/>
<line x1="324.5" y1="541.5" x2="325.5" y2="571.3" stroke="#8a98e0" stroke-width="1.45" stroke-opacity="0.6"/>
<line x1="331.4" y1="524.8" x2="332.4" y2="553.9" stroke="#4656b8" stroke-width="4.59"/>
<line x1="331.4" y1="524.8" x2="332.4" y2="553.9" stroke="#8a98e0" stroke-width="1.38" stroke-opacity="0.6"/>
<line x1="337.6" y1="509.8" x2="338.7" y2="538.2" stroke="#4656b8" stroke-width="4.37"/>
<line x1="337.6" y1="509.8" x2="338.7" y2="538.2" stroke="#8a98e0" stroke-width="1.31" stroke-opacity="0.6"/>
<line x1="360.6" y1="581.2" x2="360.3" y2="612.4" stroke="#4656b8" stroke-width="5.41"/>
<line x1="360.6" y1="581.2" x2="360.3" y2="612.4" stroke="#8a98e0" stroke-width="1.62" stroke-opacity="0.6"/>
<line x1="366.2" y1="560.5" x2="366.0" y2="590.9" stroke="#4656b8" stroke-width="5.10"/>
<line x1="366.2" y1="560.5" x2="366.0" y2="590.9" stroke="#8a98e0" stroke-width="1.53" stroke-opacity="0.6"/>
<line x1="371.2" y1="541.9" x2="371.2" y2="571.6" stroke="#4656b8" stroke-width="4.83"/>
<line x1="371.2" y1="541.9" x2="371.2" y2="571.6" stroke="#8a98e0" stroke-width="1.45" stroke-opacity="0.6"/>
<line x1="375.7" y1="525.3" x2="375.9" y2="554.2" stroke="#4656b8" stroke-width="4.58"/>
<line x1="375.7" y1="525.3" x2="375.9" y2="554.2" stroke="#8a98e0" stroke-width="1.38" stroke-opacity="0.6"/>
<line x1="379.7" y1="510.3" x2="380.1" y2="538.4" stroke="#4656b8" stroke-width="4.36"/>
<line x1="379.7" y1="510.3" x2="380.1" y2="538.4" stroke="#8a98e0" stroke-width="1.31" stroke-opacity="0.6"/>
<line x1="409.9" y1="605.1" x2="407.9" y2="636.9" stroke="#4656b8" stroke-width="5.75"/>
<line x1="409.9" y1="605.1" x2="407.9" y2="636.9" stroke="#8a98e0" stroke-width="1.72" stroke-opacity="0.6"/>
<line x1="412.8" y1="581.7" x2="411.3" y2="612.7" stroke="#4656b8" stroke-width="5.40"/>
<line x1="412.8" y1="581.7" x2="411.3" y2="612.7" stroke="#8a98e0" stroke-width="1.62" stroke-opacity="0.6"/>
<line x1="415.4" y1="561.0" x2="414.2" y2="591.1" stroke="#4656b8" stroke-width="5.10"/>
<line x1="415.4" y1="561.0" x2="414.2" y2="591.1" stroke="#8a98e0" stroke-width="1.53" stroke-opacity="0.6"/>
<line x1="417.8" y1="542.4" x2="416.9" y2="571.8" stroke="#4656b8" stroke-width="4.82"/>
<line x1="417.8" y1="542.4" x2="416.9" y2="571.8" stroke="#8a98e0" stroke-width="1.45" stroke-opacity="0.6"/>
<line x1="419.9" y1="525.8" x2="419.3" y2="554.4" stroke="#4656b8" stroke-width="4.58"/>
<line x1="419.9" y1="525.8" x2="419.3" y2="554.4" stroke="#8a98e0" stroke-width="1.37" stroke-opacity="0.6"/>
<line x1="421.8" y1="510.7" x2="421.5" y2="538.6" stroke="#4656b8" stroke-width="4.36"/>
<line x1="421.8" y1="510.7" x2="421.5" y2="538.6" stroke="#8a98e0" stroke-width="1.31" stroke-opacity="0.6"/>
<line x1="465.3" y1="605.7" x2="462.0" y2="637.2" stroke="#4656b8" stroke-width="5.74"/>
<line x1="465.3" y1="605.7" x2="462.0" y2="637.2" stroke="#8a98e0" stroke-width="1.72" stroke-opacity="0.6"/>
<line x1="465.0" y1="582.2" x2="462.3" y2="613.0" stroke="#4656b8" stroke-width="5.40"/>
<line x1="465.0" y1="582.2" x2="462.3" y2="613.0" stroke="#8a98e0" stroke-width="1.62" stroke-opacity="0.6"/>
<line x1="464.6" y1="561.5" x2="462.5" y2="591.4" stroke="#4656b8" stroke-width="5.09"/>
<line x1="464.6" y1="561.5" x2="462.5" y2="591.4" stroke="#8a98e0" stroke-width="1.53" stroke-opacity="0.6"/>
<line x1="464.3" y1="542.9" x2="462.6" y2="572.0" stroke="#4656b8" stroke-width="4.82"/>
<line x1="464.3" y1="542.9" x2="462.6" y2="572.0" stroke="#8a98e0" stroke-width="1.45" stroke-opacity="0.6"/>
<line x1="464.1" y1="526.2" x2="462.8" y2="554.6" stroke="#4656b8" stroke-width="4.57"/>
<line x1="464.1" y1="526.2" x2="462.8" y2="554.6" stroke="#8a98e0" stroke-width="1.37" stroke-opacity="0.6"/>
<line x1="463.8" y1="511.2" x2="462.9" y2="538.8" stroke="#4656b8" stroke-width="4.35"/>
<line x1="463.8" y1="511.2" x2="462.9" y2="538.8" stroke="#8a98e0" stroke-width="1.31" stroke-opacity="0.6"/>
<line x1="520.7" y1="606.2" x2="516.2" y2="637.5" stroke="#4656b8" stroke-width="5.73"/>
<line x1="520.7" y1="606.2" x2="516.2" y2="637.5" stroke="#8a98e0" stroke-width="1.72" stroke-opacity="0.6"/>
<line x1="517.0" y1="582.7" x2="513.3" y2="613.2" stroke="#4656b8" stroke-width="5.39"/>
<line x1="517.0" y1="582.7" x2="513.3" y2="613.2" stroke="#8a98e0" stroke-width="1.62" stroke-opacity="0.6"/>
<line x1="513.8" y1="562.0" x2="510.7" y2="591.6" stroke="#4656b8" stroke-width="5.09"/>
<line x1="513.8" y1="562.0" x2="510.7" y2="591.6" stroke="#8a98e0" stroke-width="1.53" stroke-opacity="0.6"/>
<line x1="510.8" y1="543.4" x2="508.4" y2="572.3" stroke="#4656b8" stroke-width="4.81"/>
<line x1="510.8" y1="543.4" x2="508.4" y2="572.3" stroke="#8a98e0" stroke-width="1.44" stroke-opacity="0.6"/>
<line x1="508.2" y1="526.7" x2="506.3" y2="554.8" stroke="#4656b8" stroke-width="4.57"/>
<line x1="508.2" y1="526.7" x2="506.3" y2="554.8" stroke="#8a98e0" stroke-width="1.37" stroke-opacity="0.6"/>
<line x1="505.8" y1="511.6" x2="504.4" y2="539.0" stroke="#4656b8" stroke-width="4.35"/>
<line x1="505.8" y1="511.6" x2="504.4" y2="539.0" stroke="#8a98e0" stroke-width="1.30" stroke-opacity="0.6"/>
<line x1="631.3" y1="607.3" x2="624.5" y2="638.0" stroke="#4656b8" stroke-width="5.72"/>
<line x1="631.3" y1="607.3" x2="624.5" y2="638.0" stroke="#8a98e0" stroke-width="1.72" stroke-opacity="0.6"/>
<line x1="621.0" y1="583.8" x2="615.3" y2="613.7" stroke="#4656b8" stroke-width="5.38"/>
<line x1="621.0" y1="583.8" x2="615.3" y2="613.7" stroke="#8a98e0" stroke-width="1.61" stroke-opacity="0.6"/>
<line x1="611.9" y1="562.9" x2="607.2" y2="592.1" stroke="#4656b8" stroke-width="5.08"/>
<line x1="611.9" y1="562.9" x2="607.2" y2="592.1" stroke="#8a98e0" stroke-width="1.52" stroke-opacity="0.6"/>
<line x1="603.7" y1="544.3" x2="599.8" y2="572.7" stroke="#4656b8" stroke-width="4.80"/>
<line x1="603.7" y1="544.3" x2="599.8" y2="572.7" stroke="#8a98e0" stroke-width="1.44" stroke-opacity="0.6"/>
<line x1="596.4" y1="527.6" x2="593.2" y2="555.2" stroke="#4656b8" stroke-width="4.56"/>
<line x1="596.4" y1="527.6" x2="593.2" y2="555.2" stroke="#8a98e0" stroke-width="1.37" stroke-opacity="0.6"/>
<line x1="589.7" y1="512.5" x2="587.3" y2="539.4" stroke="#4656b8" stroke-width="4.34"/>
<line x1="589.7" y1="512.5" x2="587.3" y2="539.4" stroke="#8a98e0" stroke-width="1.30" stroke-opacity="0.6"/>
<line x1="686.5" y1="607.8" x2="678.7" y2="638.3" stroke="#4656b8" stroke-width="5.71"/>
<line x1="686.5" y1="607.8" x2="678.7" y2="638.3" stroke="#8a98e0" stroke-width="1.71" stroke-opacity="0.6"/>
<line x1="672.9" y1="584.3" x2="666.4" y2="614.0" stroke="#4656b8" stroke-width="5.37"/>
<line x1="672.9" y1="584.3" x2="666.4" y2="614.0" stroke="#8a98e0" stroke-width="1.61" stroke-opacity="0.6"/>
<line x1="660.8" y1="563.4" x2="655.4" y2="592.4" stroke="#4656b8" stroke-width="5.07"/>
<line x1="660.8" y1="563.4" x2="655.4" y2="592.4" stroke="#8a98e0" stroke-width="1.52" stroke-opacity="0.6"/>
<line x1="650.1" y1="544.8" x2="645.6" y2="573.0" stroke="#4656b8" stroke-width="4.80"/>
<line x1="650.1" y1="544.8" x2="645.6" y2="573.0" stroke="#8a98e0" stroke-width="1.44" stroke-opacity="0.6"/>
<line x1="640.4" y1="528.1" x2="636.7" y2="555.5" stroke="#4656b8" stroke-width="4.56"/>
<line x1="640.4" y1="528.1" x2="636.7" y2="555.5" stroke="#8a98e0" stroke-width="1.37" stroke-opacity="0.6"/>
<line x1="631.6" y1="513.0" x2="628.7" y2="539.6" stroke="#4656b8" stroke-width="4.34"/>
<line x1="631.6" y1="513.0" x2="628.7" y2="539.6" stroke="#8a98e0" stroke-width="1.30" stroke-opacity="0.6"/>
<line x1="741.6" y1="608.3" x2="732.8" y2="638.6" stroke="#4656b8" stroke-width="5.71"/>
<line x1="741.6" y1="608.3" x2="732.8" y2="638.6" stroke="#8a98e0" stroke-width="1.71" stroke-opacity="0.6"/>
<line x1="724.7" y1="584.8" x2="717.4" y2="614.3" stroke="#4656b8" stroke-width="5.37"/>
<line x1="724.7" y1="584.8" x2="717.4" y2="614.3" stroke="#8a98e0" stroke-width="1.61" stroke-opacity="0.6"/>
<line x1="709.8" y1="563.9" x2="703.7" y2="592.6" stroke="#4656b8" stroke-width="5.06"/>
<line x1="709.8" y1="563.9" x2="703.7" y2="592.6" stroke="#8a98e0" stroke-width="1.52" stroke-opacity="0.6"/>
<line x1="696.4" y1="545.3" x2="691.4" y2="573.2" stroke="#4656b8" stroke-width="4.79"/>
<line x1="696.4" y1="545.3" x2="691.4" y2="573.2" stroke="#8a98e0" stroke-width="1.44" stroke-opacity="0.6"/>
<line x1="684.4" y1="528.5" x2="680.3" y2="555.7" stroke="#4656b8" stroke-width="4.55"/>
<line x1="684.4" y1="528.5" x2="680.3" y2="555.7" stroke="#8a98e0" stroke-width="1.37" stroke-opacity="0.6"/>
<line x1="673.5" y1="513.4" x2="670.2" y2="539.8" stroke="#4656b8" stroke-width="4.33"/>
<line x1="673.5" y1="513.4" x2="670.2" y2="539.8" stroke="#8a98e0" stroke-width="1.30" stroke-opacity="0.6"/>
<line x1="796.7" y1="608.8" x2="787.0" y2="638.9" stroke="#4656b8" stroke-width="5.70"/>
<line x1="796.7" y1="608.8" x2="787.0" y2="638.9" stroke="#8a98e0" stroke-width="1.71" stroke-opacity="0.6"/>
<line x1="776.5" y1="585.3" x2="768.5" y2="614.5" stroke="#4656b8" stroke-width="5.36"/>
<line x1="776.5" y1="585.3" x2="768.5" y2="614.5" stroke="#8a98e0" stroke-width="1.61" stroke-opacity="0.6"/>
<line x1="758.6" y1="564.4" x2="752.0" y2="592.9" stroke="#4656b8" stroke-width="5.06"/>
<line x1="758.6" y1="564.4" x2="752.0" y2="592.9" stroke="#8a98e0" stroke-width="1.52" stroke-opacity="0.6"/>
<line x1="742.6" y1="545.8" x2="737.1" y2="573.4" stroke="#4656b8" stroke-width="4.79"/>
<line x1="742.6" y1="545.8" x2="737.1" y2="573.4" stroke="#8a98e0" stroke-width="1.44" stroke-opacity="0.6"/>
<line x1="728.3" y1="529.0" x2="723.8" y2="555.9" stroke="#4656b8" stroke-width="4.55"/>
<line x1="728.3" y1="529.0" x2="723.8" y2="555.9" stroke="#8a98e0" stroke-width="1.36" stroke-opacity="0.6"/>
<line x1="715.3" y1="513.8" x2="711.7" y2="540.0" stroke="#4656b8" stroke-width="4.33"/>
<line x1="715.3" y1="513.8" x2="711.7" y2="540.0" stroke="#8a98e0" stroke-width="1.30" stroke-opacity="0.6"/>
<line x1="851.6" y1="609.4" x2="841.3" y2="639.2" stroke="#4656b8" stroke-width="5.69"/>
<line x1="851.6" y1="609.4" x2="841.3" y2="639.2" stroke="#8a98e0" stroke-width="1.71" stroke-opacity="0.6"/>
<line x1="828.2" y1="585.8" x2="819.6" y2="614.8" stroke="#4656b8" stroke-width="5.35"/>
<line x1="828.2" y1="585.8" x2="819.6" y2="614.8" stroke="#8a98e0" stroke-width="1.61" stroke-opacity="0.6"/>
<line x1="807.4" y1="564.9" x2="800.2" y2="593.1" stroke="#4656b8" stroke-width="5.05"/>
<line x1="807.4" y1="564.9" x2="800.2" y2="593.1" stroke="#8a98e0" stroke-width="1.52" stroke-opacity="0.6"/>
<line x1="788.9" y1="546.2" x2="782.9" y2="573.6" stroke="#4656b8" stroke-width="4.78"/>
<line x1="788.9" y1="546.2" x2="782.9" y2="573.6" stroke="#8a98e0" stroke-width="1.44" stroke-opacity="0.6"/>
<line x1="772.2" y1="529.5" x2="767.3" y2="556.1" stroke="#4656b8" stroke-width="4.54"/>
<line x1="772.2" y1="529.5" x2="767.3" y2="556.1" stroke="#8a98e0" stroke-width="1.36" stroke-opacity="0.6"/>
<line x1="757.1" y1="514.3" x2="753.2" y2="540.2" stroke="#4656b8" stroke-width="4.33"/>
<line x1="757.1" y1="514.3" x2="753.2" y2="540.2" stroke="#8a98e0" stroke-width="1.30" stroke-opacity="0.6"/>
<line x1="906.6" y1="609.9" x2="895.5" y2="639.4" stroke="#4656b8" stroke-width="5.68"/>
<line x1="906.6" y1="609.9" x2="895.5" y2="639.4" stroke="#8a98e0" stroke-width="1.71" stroke-opacity="0.6"/>
<line x1="879.9" y1="586.3" x2="870.7" y2="615.1" stroke="#4656b8" stroke-width="5.35"/>
<line x1="879.9" y1="586.3" x2="870.7" y2="615.1" stroke="#8a98e0" stroke-width="1.60" stroke-opacity="0.6"/>
<line x1="856.2" y1="565.4" x2="848.6" y2="593.3" stroke="#4656b8" stroke-width="5.05"/>
<line x1="856.2" y1="565.4" x2="848.6" y2="593.3" stroke="#8a98e0" stroke-width="1.51" stroke-opacity="0.6"/>
<line x1="835.0" y1="546.7" x2="828.7" y2="573.9" stroke="#4656b8" stroke-width="4.78"/>
<line x1="835.0" y1="546.7" x2="828.7" y2="573.9" stroke="#8a98e0" stroke-width="1.43" stroke-opacity="0.6"/>
<line x1="816.0" y1="529.9" x2="810.9" y2="556.3" stroke="#4656b8" stroke-width="4.54"/>
<line x1="816.0" y1="529.9" x2="810.9" y2="556.3" stroke="#8a98e0" stroke-width="1.36" stroke-opacity="0.6"/>
<line x1="798.8" y1="514.7" x2="794.7" y2="540.4" stroke="#4656b8" stroke-width="4.32"/>
<line x1="798.8" y1="514.7" x2="794.7" y2="540.4" stroke="#8a98e0" stroke-width="1.30" stroke-opacity="0.6"/>
<polyline points="22.5,643.9 29.5,634.9 39.5,644.9 22.5,643.9 28.5,648.9 39.5,644.9" fill="none" stroke="#a0a0a0" stroke-width="1.30" stroke-linejoin="round"/>
<line x1="29.5" y1="634.9" x2="28.5" y2="648.9" stroke="#a0a0a0" stroke-width="1.30"/>
<polyline points="48.1,619.3 54.7,610.9 64.1,620.3 48.1,619.3 53.7,624.0 64.1,620.3" fill="none" stroke="#a0a0a0" stroke-width="1.22" stroke-linejoin="round"/>
<line x1="54.7" y1="610.9" x2="53.7" y2="624.0" stroke="#a0a0a0" stroke-width="1.22"/>
<polyline points="70.9,597.4 77.1,589.4 85.9,598.3 70.9,597.4 76.2,601.8 85.9,598.3" fill="none" stroke="#a0a0a0" stroke-width="1.15" stroke-linejoin="round"/>
<line x1="77.1" y1="589.4" x2="76.2" y2="601.8" stroke="#a0a0a0" stroke-width="1.15"/>
<polyline points="91.3,577.7 97.2,570.2 105.6,578.6 91.3,577.7 96.3,581.9 105.6,578.6" fill="none" stroke="#a0a0a0" stroke-width="1.09" stroke-linejoin="round"/>
<line x1="97.2" y1="570.2" x2="96.3" y2="581.9" stroke="#a0a0a0" stroke-width="1.09"/>
<polyline points="109.7,560.0 115.3,552.9 123.2,560.8 109.7,560.0 114.5,564.0 123.2,560.8" fill="none" stroke="#a0a0a0" stroke-width="1.03" stroke-linejoin="round"/>
<line x1="115.3" y1="552.9" x2="114.5" y2="564.0" stroke="#a0a0a0" stroke-width="1.03"/>
<polyline points="126.4,543.9 131.7,537.1 139.3,544.7 126.4,543.9 131.0,547.7 139.3,544.7" fill="none" stroke="#a0a0a0" stroke-width="0.98" stroke-linejoin="round"/>
<line x1="131.7" y1="537.1" x2="131.0" y2="547.7" stroke="#a0a0a0" stroke-width="0.98"/>
<polyline points="76.5,644.2 83.5,635.2 93.5,645.2 76.5,644.2 82.5,649.2 93.5,645.2" fill="none" stroke="#a0a0a0" stroke-width="1.30" stroke-linejoin="round"/>
<line x1="83.5" y1="635.2" x2="82.5" y2="649.2" stroke="#a0a0a0" stroke-width="1.30"/>
<polyline points="99.0,619.6 105.6,611.1 114.9,620.5 99.0,619.6 104.6,624.3 114.9,620.5" fill="none" stroke="#a0a0a0" stroke-width="1.22" stroke-linejoin="round"/>
<line x1="105.6" y1="611.1" x2="104.6" y2="624.3" stroke="#a0a0a0" stroke-width="1.22"/>
<polyline points="119.0,597.6 125.2,589.7 134.1,598.5 119.0,597.6 124.3,602.1 134.1,598.5" fill="none" stroke="#a0a0a0" stroke-width="1.15" stroke-linejoin="round"/>
<line x1="125.2" y1="589.7" x2="124.3" y2="602.1" stroke="#a0a0a0" stroke-width="1.15"/>
<polyline points="137.0,578.0 142.8,570.4 151.2,578.8 137.0,578.0 142.0,582.1 151.2,578.8" fill="none" stroke="#a0a0a0" stroke-width="1.09" stroke-linejoin="round"/>
<line x1="142.8" y1="570.4" x2="142.0" y2="582.1" stroke="#a0a0a0" stroke-width="1.09"/>
<polyline points="153.1,560.2 158.7,553.1 166.6,561.0 153.1,560.2 157.9,564.2 166.6,561.0" fill="none" stroke="#a0a0a0" stroke-width="1.03" stroke-linejoin="round"/>
<line x1="158.7" y1="553.1" x2="157.9" y2="564.2" stroke="#a0a0a0" stroke-width="1.03"/>
<polyline points="167.8,544.1 173.1,537.3 180.6,544.9 167.8,544.1 172.3,547.9 180.6,544.9" fill="none" stroke="#a0a0a0" stroke-width="0.98" stroke-linejoin="round"/>
<line x1="173.1" y1="537.3" x2="172.3" y2="547.9" stroke="#a0a0a0" stroke-width="0.98"/>
<polyline points="130.6,644.5 137.6,635.5 147.5,645.5 130.6,644.5 136.6,649.5 147.5,645.5" fill="none" stroke="#a0a0a0" stroke-width="1.30" stroke-linejoin="round"/>
<line x1="137.6" y1="635.5" x2="136.6" y2="649.5" stroke="#a0a0a0" stroke-width="1.30"/>
<polyline points="149.9,619.8 156.5,611.4 165.9,620.8 149.9,619.8 155.6,624.5 165.9,620.8" fill="none" stroke="#a0a0a0" stroke-width="1.22" stroke-linejoin="round"/>
<line x1="156.5" y1="611.4" x2="155.6" y2="624.5" stroke="#a0a0a0" stroke-width="1.22"/>
<polyline points="167.2,597.9 173.4,589.9 182.2,598.7 167.2,597.9 172.5,602.3 182.2,598.7" fill="none" stroke="#a0a0a0" stroke-width="1.15" stroke-linejoin="round"/>
<line x1="173.4" y1="589.9" x2="172.5" y2="602.3" stroke="#a0a0a0" stroke-width="1.15"/>
<polyline points="182.6,578.2 188.5,570.7 196.8,579.0 182.6,578.2 187.6,582.4 196.8,579.0" fill="none" stroke="#a0a0a0" stroke-width="1.09" stroke-linejoin="round"/>
<line x1="188.5" y1="570.7" x2="187.6" y2="582.4" stroke="#a0a0a0" stroke-width="1.09"/>
<polyline points="196.6,560.4 202.1,553.3 210.0,561.2 196.6,560.4 201.3,564.4 210.0,561.2" fill="none" stroke="#a0a0a0" stroke-width="1.03" stroke-linejoin="round"/>
<line x1="202.1" y1="553.3" x2="201.3" y2="564.4" stroke="#a0a0a0" stroke-width="1.03"/>
<polyline points="209.2,544.3 214.5,537.6 222.0,545.1 209.2,544.3 213.7,548.1 222.0,545.1" fill="none" stroke="#a0a0a0" stroke-width="0.98" stroke-linejoin="round"/>
<line x1="214.5" y1="537.6" x2="213.7" y2="548.1" stroke="#a0a0a0" stroke-width="0.98"/>
<polyline points="184.6,644.7 191.6,635.8 201.6,645.7 184.6,644.7 190.6,649.7 201.6,645.7" fill="none" stroke="#a0a0a0" stroke-width="1.29" stroke-linejoin="round"/>
<line x1="191.6" y1="635.8" x2="190.6" y2="649.7" stroke="#a0a0a0" stroke-width="1.29"/>
<polyline points="200.9,620.1 207.4,611.7 216.8,621.0 200.9,620.1 206.5,624.8 216.8,621.0" fill="none" stroke="#a0a0a0" stroke-width="1.22" stroke-linejoin="round"/>
<line x1="207.4" y1="611.7" x2="206.5" y2="624.8" stroke="#a0a0a0" stroke-width="1.22"/>
<polyline points="215.3,598.1 221.5,590.2 230.3,599.0 215.3,598.1 220.6,602.5 230.3,599.0" fill="none" stroke="#a0a0a0" stroke-width="1.15" stroke-linejoin="round"/>
<line x1="221.5" y1="590.2" x2="220.6" y2="602.5" stroke="#a0a0a0" stroke-width="1.15"/>
<polyline points="228.3,578.4 234.1,570.9 242.5,579.2 228.3,578.4 233.3,582.6 242.5,579.2" fill="none" stroke="#a0a0a0" stroke-width="1.09" stroke-linejoin="round"/>
<line x1="234.1" y1="570.9" x2="233.3" y2="582.6" stroke="#a0a0a0" stroke-width="1.09"/>
<polyline points="240.0,560.6 245.5,553.5 253.5,561.4 240.0,560.6 244.7,564.6 253.5,561.4" fill="none" stroke="#a0a0a0" stroke-width="1.03" stroke-linejoin="round"/>
<line x1="245.5" y1="553.5" x2="244.7" y2="564.6" stroke="#a0a0a0" stroke-width="1.03"/>
<polyline points="250.6,544.5 255.9,537.8 263.4,545.3 250.6,544.5 255.1,548.3 263.4,545.3" fill="none" stroke="#a0a0a0" stroke-width="0.98" stroke-linejoin="round"/>
<line x1="255.9" y1="537.8" x2="255.1" y2="548.3" stroke="#a0a0a0" stroke-width="0.98"/>
<polyline points="238.7,645.0 245.7,636.1 255.6,646.0 238.7,645.0 244.7,650.0 255.6,646.0" fill="none" stroke="#a0a0a0" stroke-width="1.29" stroke-linejoin="round"/>
<line x1="245.7" y1="636.1" x2="244.7" y2="650.0" stroke="#a0a0a0" stroke-width="1.29"/>
<polyline points="251.8,620.3 258.4,611.9 267.7,621.3 251.8,620.3 257.4,625.0 267.7,621.3" fill="none" stroke="#a0a0a0" stroke-width="1.22" stroke-linejoin="round"/>
<line x1="258.4" y1="611.9" x2="257.4" y2="625.0" stroke="#a0a0a0" stroke-width="1.22"/>
<polyline points="263.5,598.3 269.7,590.4 278.5,599.2 263.5,598.3 268.8,602.7 278.5,599.2" fill="none" stroke="#a0a0a0" stroke-width="1.15" stroke-linejoin="round"/>
<line x1="269.7" y1="590.4" x2="268.8" y2="602.7" stroke="#a0a0a0" stroke-width="1.15"/>
<polyline points="274.0,578.6 279.8,571.1 288.2,579.5 274.0,578.6 279.0,582.8 288.2,579.5" fill="none" stroke="#a0a0a0" stroke-width="1.08" stroke-linejoin="round"/>
<line x1="279.8" y1="571.1" x2="279.0" y2="582.8" stroke="#a0a0a0" stroke-width="1.08"/>
<polyline points="283.4,560.9 289.0,553.7 296.9,561.6 283.4,560.9 288.2,564.8 296.9,561.6" fill="none" stroke="#a0a0a0" stroke-width="1.03" stroke-linejoin="round"/>
<line x1="289.0" y1="553.7" x2="288.2" y2="564.8" stroke="#a0a0a0" stroke-width="1.03"/>
<polyline points="292.0,544.7 297.3,538.0 304.8,545.5 292.0,544.7 296.5,548.5 304.8,545.5" fill="none" stroke="#a0a0a0" stroke-width="0.98" stroke-linejoin="round"/>
<line x1="297.3" y1="538.0" x2="296.5" y2="548.5" stroke="#a0a0a0" stroke-width="0.98"/>
<polyline points="292.8,645.3 299.7,636.3 309.7,646.3 292.8,645.3 298.7,650.2 309.7,646.3" fill="none" stroke="#a0a0a0" stroke-width="1.29" stroke-linejoin="round"/>
<line x1="299.7" y1="636.3" x2="298.7" y2="650.2" stroke="#a0a0a0" stroke-width="1.29"/>
<polyline points="302.8,620.6 309.3,612.2 318.7,621.5 302.8,620.6 308.4,625.2 318.7,621.5" fill="none" stroke="#a0a0a0" stroke-width="1.21" stroke-linejoin="round"/>
<line x1="309.3" y1="612.2" x2="308.4" y2="625.2" stroke="#a0a0a0" stroke-width="1.21"/>
<polyline points="311.7,598.6 317.9,590.6 326.7,599.5 311.7,598.6 317.0,603.0 326.7,599.5" fill="none" stroke="#a0a0a0" stroke-width="1.14" stroke-linejoin="round"/>
<line x1="317.9" y1="590.6" x2="317.0" y2="603.0" stroke="#a0a0a0" stroke-width="1.14"/>
<polyline points="319.7,578.8 325.5,571.3 333.8,579.7 319.7,578.8 324.7,583.0 333.8,579.7" fill="none" stroke="#a0a0a0" stroke-width="1.08" stroke-linejoin="round"/>
<line x1="325.5" y1="571.3" x2="324.7" y2="583.0" stroke="#a0a0a0" stroke-width="1.08"/>
<polyline points="326.9,561.1 332.4,553.9 340.3,561.9 326.9,561.1 331.6,565.0 340.3,561.9" fill="none" stroke="#a0a0a0" stroke-width="1.03" stroke-linejoin="round"/>
<line x1="332.4" y1="553.9" x2="331.6" y2="565.0" stroke="#a0a0a0" stroke-width="1.03"/>
<polyline points="333.4,544.9 338.7,538.2 346.2,545.7 333.4,544.9 337.9,548.7 346.2,545.7" fill="none" stroke="#a0a0a0" stroke-width="0.98" stroke-linejoin="round"/>
<line x1="338.7" y1="538.2" x2="337.9" y2="548.7" stroke="#a0a0a0" stroke-width="0.98"/>
<polyline points="353.8,620.8 360.3,612.4 369.6,621.8 353.8,620.8 359.4,625.5 369.6,621.8" fill="none" stroke="#a0a0a0" stroke-width="1.21" stroke-linejoin="round"/>
<line x1="360.3" y1="612.4" x2="359.4" y2="625.5" stroke="#a0a0a0" stroke-width="1.21"/>
<polyline points="359.9,598.8 366.0,590.9 374.8,599.7 359.9,598.8 365.2,603.2 374.8,599.7" fill="none" stroke="#a0a0a0" stroke-width="1.14" stroke-linejoin="round"/>
<line x1="366.0" y1="590.9" x2="365.2" y2="603.2" stroke="#a0a0a0" stroke-width="1.14"/>
<polyline points="365.4,579.1 371.2,571.6 379.5,579.9 365.4,579.1 370.4,583.2 379.5,579.9" fill="none" stroke="#a0a0a0" stroke-width="1.08" stroke-linejoin="round"/>
<line x1="371.2" y1="571.6" x2="370.4" y2="583.2" stroke="#a0a0a0" stroke-width="1.08"/>
<polyline points="370.3,561.3 375.9,554.2 383.8,562.1 370.3,561.3 375.1,565.2 383.8,562.1" fill="none" stroke="#a0a0a0" stroke-width="1.03" stroke-linejoin="round"/>
<line x1="375.9" y1="554.2" x2="375.1" y2="565.2" stroke="#a0a0a0" stroke-width="1.03"/>
<polyline points="374.8,545.1 380.1,538.4 387.6,545.9 374.8,545.1 379.3,548.9 387.6,545.9" fill="none" stroke="#a0a0a0" stroke-width="0.98" stroke-linejoin="round"/>
<line x1="380.1" y1="538.4" x2="379.3" y2="548.9" stroke="#a0a0a0" stroke-width="0.98"/>
<polyline points="401.0,645.8 407.9,636.9 417.8,646.8 401.0,645.8 406.9,650.8 417.8,646.8" fill="none" stroke="#a0a0a0" stroke-width="1.29" stroke-linejoin="round"/>
<line x1="407.9" y1="636.9" x2="406.9" y2="650.8" stroke="#a0a0a0" stroke-width="1.29"/>
<polyline points="404.7,621.1 411.3,612.7 420.6,622.0 404.7,621.1 410.3,625.7 420.6,622.0" fill="none" stroke="#a0a0a0" stroke-width="1.21" stroke-linejoin="round"/>
<line x1="411.3" y1="612.7" x2="410.3" y2="625.7" stroke="#a0a0a0" stroke-width="1.21"/>
<polyline points="408.1,599.0 414.2,591.1 423.0,599.9 408.1,599.0 413.4,603.4 423.0,599.9" fill="none" stroke="#a0a0a0" stroke-width="1.14" stroke-linejoin="round"/>
<line x1="414.2" y1="591.1" x2="413.4" y2="603.4" stroke="#a0a0a0" stroke-width="1.14"/>
<polyline points="411.1,579.3 416.9,571.8 425.2,580.1 411.1,579.3 416.1,583.4 425.2,580.1" fill="none" stroke="#a0a0a0" stroke-width="1.08" stroke-linejoin="round"/>
<line x1="416.9" y1="571.8" x2="416.1" y2="583.4" stroke="#a0a0a0" stroke-width="1.08"/>
<polyline points="413.8,561.5 419.3,554.4 427.2,562.3 413.8,561.5 418.5,565.4 427.2,562.3" fill="none" stroke="#a0a0a0" stroke-width="1.03" stroke-linejoin="round"/>
<line x1="419.3" y1="554.4" x2="418.5" y2="565.4" stroke="#a0a0a0" stroke-width="1.03"/>
<polyline points="416.2,545.3 421.5,538.6 429.0,546.1 416.2,545.3 420.7,549.1 429.0,546.1" fill="none" stroke="#a0a0a0" stroke-width="0.98" stroke-linejoin="round"/>
<line x1="421.5" y1="538.6" x2="420.7" y2="549.1" stroke="#a0a0a0" stroke-width="0.98"/>
<polyline points="455.1,646.1 462.0,637.2 471.9,647.1 455.1,646.1 461.1,651.0 471.9,647.1" fill="none" stroke="#a0a0a0" stroke-width="1.29" stroke-linejoin="round"/>
<line x1="462.0" y1="637.2" x2="461.1" y2="651.0" stroke="#a0a0a0" stroke-width="1.29"/>
<polyline points="455.7,621.3 462.3,613.0 471.6,622.3 455.7,621.3 461.3,626.0 471.6,622.3" fill="none" stroke="#a0a0a0" stroke-width="1.21" stroke-linejoin="round"/>
<line x1="462.3" y1="613.0" x2="461.3" y2="626.0" stroke="#a0a0a0" stroke-width="1.21"/>
<polyline points="456.3,599.3 462.5,591.4 471.2,600.2 456.3,599.3 461.6,603.7 471.2,600.2" fill="none" stroke="#a0a0a0" stroke-width="1.14" stroke-linejoin="round"/>
<line x1="462.5" y1="591.4" x2="461.6" y2="603.7" stroke="#a0a0a0" stroke-width="1.14"/>
<polyline points="456.8,579.5 462.6,572.0 470.9,580.3 456.8,579.5 461.8,583.7 470.9,580.3" fill="none" stroke="#a0a0a0" stroke-width="1.08" stroke-linejoin="round"/>
<line x1="462.6" y1="572.0" x2="461.8" y2="583.7" stroke="#a0a0a0" stroke-width="1.08"/>
<polyline points="457.3,561.7 462.8,554.6 470.7,562.5 457.3,561.7 462.0,565.6 470.7,562.5" fill="none" stroke="#a0a0a0" stroke-width="1.03" stroke-linejoin="round"/>
<line x1="462.8" y1="554.6" x2="462.0" y2="565.6" stroke="#a0a0a0" stroke-width="1.03"/>
<polyline points="457.7,545.5 462.9,538.8 470.4,546.3 457.7,545.5 462.2,549.3 470.4,546.3" fill="none" stroke="#a0a0a0" stroke-width="0.98" stroke-linejoin="round"/>
<line x1="462.9" y1="538.8" x2="462.2" y2="549.3" stroke="#a0a0a0" stroke-width="0.98"/>
<polyline points="509.3,646.4 516.2,637.5 526.1,647.4 509.3,646.4 515.2,651.3 526.1,647.4" fill="none" stroke="#a0a0a0" stroke-width="1.29" stroke-linejoin="round"/>
<line x1="516.2" y1="637.5" x2="515.2" y2="651.3" stroke="#a0a0a0" stroke-width="1.29"/>
<polyline points="506.8,621.6 513.3,613.2 522.6,622.5 506.8,621.6 512.3,626.2 522.6,622.5" fill="none" stroke="#a0a0a0" stroke-width="1.21" stroke-linejoin="round"/>
<line x1="513.3" y1="613.2" x2="512.3" y2="626.2" stroke="#a0a0a0" stroke-width="1.21"/>
<polyline points="504.5,599.5 510.7,591.6 519.4,600.4 504.5,599.5 509.8,603.9 519.4,600.4" fill="none" stroke="#a0a0a0" stroke-width="1.14" stroke-linejoin="round"/>
<line x1="510.7" y1="591.6" x2="509.8" y2="603.9" stroke="#a0a0a0" stroke-width="1.14"/>
<polyline points="502.5,579.7 508.4,572.3 516.7,580.6 502.5,579.7 507.5,583.9 516.7,580.6" fill="none" stroke="#a0a0a0" stroke-width="1.08" stroke-linejoin="round"/>
<line x1="508.4" y1="572.3" x2="507.5" y2="583.9" stroke="#a0a0a0" stroke-width="1.08"/>
<polyline points="500.7,561.9 506.3,554.8 514.1,562.7 500.7,561.9 505.5,565.8 514.1,562.7" fill="none" stroke="#a0a0a0" stroke-width="1.02" stroke-linejoin="round"/>
<line x1="506.3" y1="554.8" x2="505.5" y2="565.8" stroke="#a0a0a0" stroke-width="1.02"/>
<polyline points="499.1,545.7 504.4,539.0 511.9,546.5 499.1,545.7 503.6,549.5 511.9,546.5" fill="none" stroke="#a0a0a0" stroke-width="0.97" stroke-linejoin="round"/>
<line x1="504.4" y1="539.0" x2="503.6" y2="549.5" stroke="#a0a0a0" stroke-width="0.97"/>
<polyline points="617.6,646.9 624.5,638.0 634.3,647.9 617.6,646.9 623.5,651.8 634.3,647.9" fill="none" stroke="#a0a0a0" stroke-width="1.28" stroke-linejoin="round"/>
<line x1="624.5" y1="638.0" x2="623.5" y2="651.8" stroke="#a0a0a0" stroke-width="1.28"/>
<polyline points="608.8,622.1 615.3,613.7 624.6,623.0 608.8,622.1 614.4,626.7 624.6,623.0" fill="none" stroke="#a0a0a0" stroke-width="1.21" stroke-linejoin="round"/>
<line x1="615.3" y1="613.7" x2="614.4" y2="626.7" stroke="#a0a0a0" stroke-width="1.21"/>
<polyline points="601.0,600.0 607.2,592.1 615.9,600.9 601.0,600.0 606.3,604.4 615.9,600.9" fill="none" stroke="#a0a0a0" stroke-width="1.14" stroke-linejoin="round"/>
<line x1="607.2" y1="592.1" x2="606.3" y2="604.4" stroke="#a0a0a0" stroke-width="1.14"/>
<polyline points="594.0,580.2 599.8,572.7 608.1,581.0 594.0,580.2 599.0,584.3 608.1,581.0" fill="none" stroke="#a0a0a0" stroke-width="1.08" stroke-linejoin="round"/>
<line x1="599.8" y1="572.7" x2="599.0" y2="584.3" stroke="#a0a0a0" stroke-width="1.08"/>
<polyline points="587.7,562.3 593.2,555.2 601.1,563.1 587.7,562.3 592.5,566.3 601.1,563.1" fill="none" stroke="#a0a0a0" stroke-width="1.02" stroke-linejoin="round"/>
<line x1="593.2" y1="555.2" x2="592.5" y2="566.3" stroke="#a0a0a0" stroke-width="1.02"/>
<polyline points="582.0,546.1 587.3,539.4 594.7,546.9 582.0,546.1 586.5,549.9 594.7,546.9" fill="none" stroke="#a0a0a0" stroke-width="0.97" stroke-linejoin="round"/>
<line x1="587.3" y1="539.4" x2="586.5" y2="549.9" stroke="#a0a0a0" stroke-width="0.97"/>
<polyline points="671.8,647.2 678.7,638.3 688.5,648.2 671.8,647.2 677.7,652.1 688.5,648.2" fill="none" stroke="#a0a0a0" stroke-width="1.28" stroke-linejoin="round"/>
<line x1="678.7" y1="638.3" x2="677.7" y2="652.1" stroke="#a0a0a0" stroke-width="1.28"/>
<polyline points="659.9,622.3 666.4,614.0 675.6,623.3 659.9,622.3 665.4,627.0 675.6,623.3" fill="none" stroke="#a0a0a0" stroke-width="1.20" stroke-linejoin="round"/>
<line x1="666.4" y1="614.0" x2="665.4" y2="627.0" stroke="#a0a0a0" stroke-width="1.20"/>
<polyline points="649.3,600.2 655.4,592.4 664.2,601.1 649.3,600.2 654.5,604.6 664.2,601.1" fill="none" stroke="#a0a0a0" stroke-width="1.14" stroke-linejoin="round"/>
<line x1="655.4" y1="592.4" x2="654.5" y2="604.6" stroke="#a0a0a0" stroke-width="1.14"/>
<polyline points="639.8,580.4 645.6,573.0 653.9,581.2 639.8,580.4 644.8,584.5 653.9,581.2" fill="none" stroke="#a0a0a0" stroke-width="1.08" stroke-linejoin="round"/>
<line x1="645.6" y1="573.0" x2="644.8" y2="584.5" stroke="#a0a0a0" stroke-width="1.08"/>
<polyline points="631.2,562.5 636.7,555.5 644.6,563.3 631.2,562.5 636.0,566.5 644.6,563.3" fill="none" stroke="#a0a0a0" stroke-width="1.02" stroke-linejoin="round"/>
<line x1="636.7" y1="555.5" x2="636.0" y2="566.5" stroke="#a0a0a0" stroke-width="1.02"/>
<polyline points="623.5,546.3 628.7,539.6 636.2,547.1 623.5,546.3 628.0,550.1 636.2,547.1" fill="none" stroke="#a0a0a0" stroke-width="0.97" stroke-linejoin="round"/>
<line x1="628.7" y1="539.6" x2="628.0" y2="550.1" stroke="#a0a0a0" stroke-width="0.97"/>
<polyline points="726.0,647.4 732.8,638.6 742.7,648.4 726.0,647.4 731.9,652.4 742.7,648.4" fill="none" stroke="#a0a0a0" stroke-width="1.28" stroke-linejoin="round"/>
<line x1="732.8" y1="638.6" x2="731.9" y2="652.4" stroke="#a0a0a0" stroke-width="1.28"/>
<polyline points="710.9,622.6 717.4,614.3 726.7,623.5 710.9,622.6 716.5,627.2 726.7,623.5" fill="none" stroke="#a0a0a0" stroke-width="1.20" stroke-linejoin="round"/>
<line x1="717.4" y1="614.3" x2="716.5" y2="627.2" stroke="#a0a0a0" stroke-width="1.20"/>
<polyline points="697.6,600.5 703.7,592.6 712.4,601.3 697.6,600.5 702.8,604.8 712.4,601.3" fill="none" stroke="#a0a0a0" stroke-width="1.14" stroke-linejoin="round"/>
<line x1="703.7" y1="592.6" x2="702.8" y2="604.8" stroke="#a0a0a0" stroke-width="1.14"/>
<polyline points="685.6,580.6 691.4,573.2 699.6,581.5 685.6,580.6 690.5,584.8 699.6,581.5" fill="none" stroke="#a0a0a0" stroke-width="1.07" stroke-linejoin="round"/>
<line x1="691.4" y1="573.2" x2="690.5" y2="584.8" stroke="#a0a0a0" stroke-width="1.07"/>
<polyline points="674.8,562.7 680.3,555.7 688.1,563.5 674.8,562.7 679.5,566.7 688.1,563.5" fill="none" stroke="#a0a0a0" stroke-width="1.02" stroke-linejoin="round"/>
<line x1="680.3" y1="555.7" x2="679.5" y2="566.7" stroke="#a0a0a0" stroke-width="1.02"/>
<polyline points="665.0,546.5 670.2,539.8 677.7,547.3 665.0,546.5 669.4,550.3 677.7,547.3" fill="none" stroke="#a0a0a0" stroke-width="0.97" stroke-linejoin="round"/>
<line x1="670.2" y1="539.8" x2="669.4" y2="550.3" stroke="#a0a0a0" stroke-width="0.97"/>
<polyline points="780.2,647.7 787.0,638.9 796.9,648.7 780.2,647.7 786.1,652.6 796.9,648.7" fill="none" stroke="#a0a0a0" stroke-width="1.28" stroke-linejoin="round"/>
<line x1="787.0" y1="638.9" x2="786.1" y2="652.6" stroke="#a0a0a0" stroke-width="1.28"/>
<polyline points="762.0,622.9 768.5,614.5 777.7,623.8 762.0,622.9 767.6,627.5 777.7,623.8" fill="none" stroke="#a0a0a0" stroke-width="1.20" stroke-linejoin="round"/>
<line x1="768.5" y1="614.5" x2="767.6" y2="627.5" stroke="#a0a0a0" stroke-width="1.20"/>
<polyline points="745.9,600.7 752.0,592.9 760.7,601.6 745.9,600.7 751.1,605.1 760.7,601.6" fill="none" stroke="#a0a0a0" stroke-width="1.13" stroke-linejoin="round"/>
<line x1="752.0" y1="592.9" x2="751.1" y2="605.1" stroke="#a0a0a0" stroke-width="1.13"/>
<polyline points="731.4,580.9 737.1,573.4 745.4,581.7 731.4,580.9 736.3,585.0 745.4,581.7" fill="none" stroke="#a0a0a0" stroke-width="1.07" stroke-linejoin="round"/>
<line x1="737.1" y1="573.4" x2="736.3" y2="585.0" stroke="#a0a0a0" stroke-width="1.07"/>
<polyline points="718.3,563.0 723.8,555.9 731.6,563.7 718.3,563.0 723.0,566.9 731.6,563.7" fill="none" stroke="#a0a0a0" stroke-width="1.02" stroke-linejoin="round"/>
<line x1="723.8" y1="555.9" x2="723.0" y2="566.9" stroke="#a0a0a0" stroke-width="1.02"/>
<polyline points="706.4,546.7 711.7,540.0 719.1,547.5 706.4,546.7 710.9,550.5 719.1,547.5" fill="none" stroke="#a0a0a0" stroke-width="0.97" stroke-linejoin="round"/>
<line x1="711.7" y1="540.0" x2="710.9" y2="550.5" stroke="#a0a0a0" stroke-width="0.97"/>
<polyline points="834.4,648.0 841.3,639.2 851.1,649.0 834.4,648.0 840.3,652.9 851.1,649.0" fill="none" stroke="#a0a0a0" stroke-width="1.28" stroke-linejoin="round"/>
<line x1="841.3" y1="639.2" x2="840.3" y2="652.9" stroke="#a0a0a0" stroke-width="1.28"/>
<polyline points="813.1,623.1 819.6,614.8 828.8,624.0 813.1,623.1 818.6,627.7 828.8,624.0" fill="none" stroke="#a0a0a0" stroke-width="1.20" stroke-linejoin="round"/>
<line x1="819.6" y1="614.8" x2="818.6" y2="627.7" stroke="#a0a0a0" stroke-width="1.20"/>
<polyline points="794.2,600.9 800.2,593.1 809.0,601.8 794.2,600.9 799.4,605.3 809.0,601.8" fill="none" stroke="#a0a0a0" stroke-width="1.13" stroke-linejoin="round"/>
<line x1="800.2" y1="593.1" x2="799.4" y2="605.3" stroke="#a0a0a0" stroke-width="1.13"/>
<polyline points="777.2,581.1 782.9,573.6 791.2,581.9 777.2,581.1 782.1,585.2 791.2,581.9" fill="none" stroke="#a0a0a0" stroke-width="1.07" stroke-linejoin="round"/>
<line x1="782.9" y1="573.6" x2="782.1" y2="585.2" stroke="#a0a0a0" stroke-width="1.07"/>
<polyline points="761.8,563.2 767.3,556.1 775.1,563.9 761.8,563.2 766.5,567.1 775.1,563.9" fill="none" stroke="#a0a0a0" stroke-width="1.02" stroke-linejoin="round"/>
<line x1="767.3" y1="556.1" x2="766.5" y2="567.1" stroke="#a0a0a0" stroke-width="1.02"/>
<polyline points="747.9,546.9 753.2,540.2 760.6,547.7 747.9,546.9 752.4,550.7 760.6,547.7" fill="none" stroke="#a0a0a0" stroke-width="0.97" stroke-linejoin="round"/>
<line x1="753.2" y1="540.2" x2="752.4" y2="550.7" stroke="#a0a0a0" stroke-width="0.97"/>
<polyline points="888.6,648.3 895.5,639.4 905.3,649.2 888.6,648.3 894.5,653.2 905.3,649.2" fill="none" stroke="#a0a0a0" stroke-width="1.27" stroke-linejoin="round"/>
<line x1="895.5" y1="639.4" x2="894.5" y2="653.2" stroke="#a0a0a0" stroke-width="1.27"/>
<polyline points="864.2,623.4 870.7,615.1 879.9,624.3 864.2,623.4 869.7,628.0 879.9,624.3" fill="none" stroke="#a0a0a0" stroke-width="1.20" stroke-linejoin="round"/>
<line x1="870.7" y1="615.1" x2="869.7" y2="628.0" stroke="#a0a0a0" stroke-width="1.20"/>
<polyline points="842.5,601.2 848.6,593.3 857.3,602.0 842.5,601.2 847.7,605.5 857.3,602.0" fill="none" stroke="#a0a0a0" stroke-width="1.13" stroke-linejoin="round"/>
<line x1="848.6" y1="593.3" x2="847.7" y2="605.5" stroke="#a0a0a0" stroke-width="1.13"/>
<polyline points="823.0,581.3 828.7,573.9 837.0,582.1 823.0,581.3 827.9,585.4 837.0,582.1" fill="none" stroke="#a0a0a0" stroke-width="1.07" stroke-linejoin="round"/>
<line x1="828.7" y1="573.9" x2="827.9" y2="585.4" stroke="#a0a0a0" stroke-width="1.07"/>
<polyline points="805.4,563.4 810.9,556.3 818.7,564.2 805.4,563.4 810.1,567.3 818.7,564.2" fill="none" stroke="#a0a0a0" stroke-width="1.02" stroke-linejoin="round"/>
<line x1="810.9" y1="556.3" x2="810.1" y2="567.3" stroke="#a0a0a0" stroke-width="1.02"/>
<polyline points="789.4,547.1 794.7,540.4 802.1,547.9 789.4,547.1 793.9,550.9 802.1,547.9" fill="none" stroke="#a0a0a0" stroke-width="0.97" stroke-linejoin="round"/>
<line x1="794.7" y1="540.4" x2="793.9" y2="550.9" stroke="#a0a0a0" stroke-width="0.97"/>
<line x1="355.0" y1="603.0" x2="356.5" y2="639.0" stroke="#4656b8" stroke-width="5.00"/>
<line x1="355.0" y1="603.0" x2="356.5" y2="639.0" stroke="#8a98e0" stroke-width="1.40" stroke-opacity="0.6"/>
<rect x="349" y="638.5" width="15" height="7" fill="none" stroke="#a0a0a0" stroke-width="1.4"/>
<line x1="356.5" y1="638.0" x2="356.5" y2="650.0" stroke="#a0a0a0" stroke-width="1.40"/>
<line x1="28.5" y1="634.0" x2="64.0" y2="606.0" stroke="#4656b8" stroke-width="5.50"/>
<line x1="28.5" y1="634.0" x2="64.0" y2="606.0" stroke="#8a98e0" stroke-width="1.60" stroke-opacity="0.6"/>
<polygon points="100.0,603.5 300.0,605.5 300.0,616.0 104.0,614.5" fill="#4a5ab8" fill-opacity="0.8"/>
<line x1="102.0" y1="609.0" x2="300.0" y2="610.8" stroke="#8a98e0" stroke-width="1.20" stroke-opacity="0.7"/>
<polygon points="362.0,607.0 522.0,607.0 522.0,617.0 362.0,617.0" fill="#4a5ab8" fill-opacity="0.8"/>
<line x1="362.0" y1="612.0" x2="522.0" y2="612.0" stroke="#8a98e0" stroke-width="1.20" stroke-opacity="0.7"/>
<polygon points="664.0,612.0 772.0,612.0 772.0,620.0 664.0,620.0" fill="#4a5ab8" fill-opacity="0.8"/>
<line x1="664.0" y1="616.0" x2="772.0" y2="616.0" stroke="#8a98e0" stroke-width="1.20" stroke-opacity="0.7"/>
<polygon points="126.3,507.6 337.6,509.8 298.7,604.1 19.7,601.4" fill="#b3b3b3"/>
<polygon points="337.6,509.8 421.8,510.7 411.0,596.0 302.5,595.0" fill="#b3b3b3"/>
<polygon points="421.8,510.7 505.8,511.6 520.7,606.2 409.9,605.1" fill="#b3b3b3"/>
<polygon points="507.0,518.9 593.0,519.9 626.6,596.5 519.0,595.5" fill="#b3b3b3"/>
<polygon points="589.7,512.5 798.8,514.7 906.6,609.9 631.3,607.3" fill="#b3b3b3"/>
<clipPath id="slabclip"><polygon points="126.3,507.6 337.6,509.8 298.7,604.1 19.7,601.4"/><polygon points="337.6,509.8 421.8,510.7 411.0,596.0 302.5,595.0"/><polygon points="421.8,510.7 505.8,511.6 520.7,606.2 409.9,605.1"/><polygon points="507.0,518.9 593.0,519.9 626.6,596.5 519.0,595.5"/><polygon points="589.7,512.5 798.8,514.7 906.6,609.9 631.3,607.3"/></clipPath>
<g clip-path="url(#slabclip)" opacity="0.8">
<line x1="19.7" y1="601.4" x2="29.5" y2="634.9" stroke="#646c9e" stroke-width="4.35"/>
<line x1="46.2" y1="578.1" x2="54.7" y2="610.9" stroke="#646c9e" stroke-width="4.09"/>
<line x1="69.6" y1="557.5" x2="77.1" y2="589.4" stroke="#646c9e" stroke-width="3.85"/>
<line x1="90.6" y1="539.1" x2="97.2" y2="570.2" stroke="#646c9e" stroke-width="3.64"/>
<line x1="109.4" y1="522.5" x2="115.3" y2="552.9" stroke="#646c9e" stroke-width="3.46"/>
<line x1="126.3" y1="507.6" x2="131.7" y2="537.1" stroke="#646c9e" stroke-width="3.29"/>
<line x1="75.7" y1="601.9" x2="83.5" y2="635.2" stroke="#646c9e" stroke-width="4.34"/>
<line x1="98.7" y1="578.6" x2="105.6" y2="611.1" stroke="#646c9e" stroke-width="4.08"/>
<line x1="119.2" y1="558.0" x2="125.2" y2="589.7" stroke="#646c9e" stroke-width="3.85"/>
<line x1="137.5" y1="539.5" x2="142.8" y2="570.4" stroke="#646c9e" stroke-width="3.64"/>
<line x1="153.9" y1="523.0" x2="158.7" y2="553.1" stroke="#646c9e" stroke-width="3.45"/>
<line x1="168.7" y1="508.0" x2="173.1" y2="537.3" stroke="#646c9e" stroke-width="3.29"/>
<line x1="131.5" y1="602.5" x2="137.6" y2="635.5" stroke="#646c9e" stroke-width="4.34"/>
<line x1="151.2" y1="579.1" x2="156.5" y2="611.4" stroke="#646c9e" stroke-width="4.08"/>
<line x1="168.7" y1="558.5" x2="173.4" y2="589.9" stroke="#646c9e" stroke-width="3.84"/>
<line x1="184.3" y1="540.0" x2="188.5" y2="570.7" stroke="#646c9e" stroke-width="3.64"/>
<line x1="198.3" y1="523.4" x2="202.1" y2="553.3" stroke="#646c9e" stroke-width="3.45"/>
<line x1="211.0" y1="508.5" x2="214.5" y2="537.6" stroke="#646c9e" stroke-width="3.28"/>
<line x1="187.3" y1="603.0" x2="191.6" y2="635.8" stroke="#646c9e" stroke-width="4.33"/>
<line x1="203.7" y1="579.7" x2="207.4" y2="611.7" stroke="#646c9e" stroke-width="4.07"/>
<line x1="218.2" y1="559.0" x2="221.5" y2="590.2" stroke="#646c9e" stroke-width="3.84"/>
<line x1="231.1" y1="540.5" x2="234.1" y2="570.9" stroke="#646c9e" stroke-width="3.63"/>
<line x1="242.7" y1="523.9" x2="245.5" y2="553.5" stroke="#646c9e" stroke-width="3.45"/>
<line x1="253.2" y1="508.9" x2="255.9" y2="537.8" stroke="#646c9e" stroke-width="3.28"/>
<line x1="243.1" y1="603.5" x2="245.7" y2="636.1" stroke="#646c9e" stroke-width="4.33"/>
<line x1="256.1" y1="580.2" x2="258.4" y2="611.9" stroke="#646c9e" stroke-width="4.07"/>
<line x1="267.6" y1="559.5" x2="269.7" y2="590.4" stroke="#646c9e" stroke-width="3.84"/>
<line x1="277.8" y1="541.0" x2="279.8" y2="571.1" stroke="#646c9e" stroke-width="3.63"/>
<line x1="287.1" y1="524.4" x2="289.0" y2="553.7" stroke="#646c9e" stroke-width="3.44"/>
<line x1="295.4" y1="509.4" x2="297.3" y2="538.0" stroke="#646c9e" stroke-width="3.28"/>
<line x1="298.7" y1="604.1" x2="299.7" y2="636.3" stroke="#646c9e" stroke-width="4.32"/>
<line x1="308.4" y1="580.7" x2="309.3" y2="612.2" stroke="#646c9e" stroke-width="4.06"/>
<line x1="316.9" y1="560.0" x2="317.9" y2="590.6" stroke="#646c9e" stroke-width="3.83"/>
<line x1="324.5" y1="541.5" x2="325.5" y2="571.3" stroke="#646c9e" stroke-width="3.63"/>
<line x1="331.4" y1="524.8" x2="332.4" y2="553.9" stroke="#646c9e" stroke-width="3.44"/>
<line x1="337.6" y1="509.8" x2="338.7" y2="538.2" stroke="#646c9e" stroke-width="3.27"/>
<line x1="360.6" y1="581.2" x2="360.3" y2="612.4" stroke="#646c9e" stroke-width="4.06"/>
<line x1="366.2" y1="560.5" x2="366.0" y2="590.9" stroke="#646c9e" stroke-width="3.83"/>
<line x1="371.2" y1="541.9" x2="371.2" y2="571.6" stroke="#646c9e" stroke-width="3.62"/>
<line x1="375.7" y1="525.3" x2="375.9" y2="554.2" stroke="#646c9e" stroke-width="3.44"/>
<line x1="379.7" y1="510.3" x2="380.1" y2="538.4" stroke="#646c9e" stroke-width="3.27"/>
<line x1="409.9" y1="605.1" x2="407.9" y2="636.9" stroke="#646c9e" stroke-width="4.31"/>
<line x1="412.8" y1="581.7" x2="411.3" y2="612.7" stroke="#646c9e" stroke-width="4.05"/>
<line x1="415.4" y1="561.0" x2="414.2" y2="591.1" stroke="#646c9e" stroke-width="3.82"/>
<line x1="417.8" y1="542.4" x2="416.9" y2="571.8" stroke="#646c9e" stroke-width="3.62"/>
<line x1="419.9" y1="525.8" x2="419.3" y2="554.4" stroke="#646c9e" stroke-width="3.43"/>
<line x1="421.8" y1="510.7" x2="421.5" y2="538.6" stroke="#646c9e" stroke-width="3.27"/>
<line x1="465.3" y1="605.7" x2="462.0" y2="637.2" stroke="#646c9e" stroke-width="4.31"/>
<line x1="465.0" y1="582.2" x2="462.3" y2="613.0" stroke="#646c9e" stroke-width="4.05"/>
<line x1="464.6" y1="561.5" x2="462.5" y2="591.4" stroke="#646c9e" stroke-width="3.82"/>
<line x1="464.3" y1="542.9" x2="462.6" y2="572.0" stroke="#646c9e" stroke-width="3.61"/>
<line x1="464.1" y1="526.2" x2="462.8" y2="554.6" stroke="#646c9e" stroke-width="3.43"/>
<line x1="463.8" y1="511.2" x2="462.9" y2="538.8" stroke="#646c9e" stroke-width="3.26"/>
<line x1="520.7" y1="606.2" x2="516.2" y2="637.5" stroke="#646c9e" stroke-width="4.30"/>
<line x1="517.0" y1="582.7" x2="513.3" y2="613.2" stroke="#646c9e" stroke-width="4.04"/>
<line x1="513.8" y1="562.0" x2="510.7" y2="591.6" stroke="#646c9e" stroke-width="3.81"/>
<line x1="510.8" y1="543.4" x2="508.4" y2="572.3" stroke="#646c9e" stroke-width="3.61"/>
<line x1="508.2" y1="526.7" x2="506.3" y2="554.8" stroke="#646c9e" stroke-width="3.43"/>
<line x1="505.8" y1="511.6" x2="504.4" y2="539.0" stroke="#646c9e" stroke-width="3.26"/>
<line x1="631.3" y1="607.3" x2="624.5" y2="638.0" stroke="#646c9e" stroke-width="4.29"/>
<line x1="621.0" y1="583.8" x2="615.3" y2="613.7" stroke="#646c9e" stroke-width="4.03"/>
<line x1="611.9" y1="562.9" x2="607.2" y2="592.1" stroke="#646c9e" stroke-width="3.81"/>
<line x1="603.7" y1="544.3" x2="599.8" y2="572.7" stroke="#646c9e" stroke-width="3.60"/>
<line x1="596.4" y1="527.6" x2="593.2" y2="555.2" stroke="#646c9e" stroke-width="3.42"/>
<line x1="589.7" y1="512.5" x2="587.3" y2="539.4" stroke="#646c9e" stroke-width="3.26"/>
<line x1="686.5" y1="607.8" x2="678.7" y2="638.3" stroke="#646c9e" stroke-width="4.28"/>
<line x1="672.9" y1="584.3" x2="666.4" y2="614.0" stroke="#646c9e" stroke-width="4.03"/>
<line x1="660.8" y1="563.4" x2="655.4" y2="592.4" stroke="#646c9e" stroke-width="3.80"/>
<line x1="650.1" y1="544.8" x2="645.6" y2="573.0" stroke="#646c9e" stroke-width="3.60"/>
<line x1="640.4" y1="528.1" x2="636.7" y2="555.5" stroke="#646c9e" stroke-width="3.42"/>
<line x1="631.6" y1="513.0" x2="628.7" y2="539.6" stroke="#646c9e" stroke-width="3.25"/>
<line x1="741.6" y1="608.3" x2="732.8" y2="638.6" stroke="#646c9e" stroke-width="4.28"/>
<line x1="724.7" y1="584.8" x2="717.4" y2="614.3" stroke="#646c9e" stroke-width="4.02"/>
<line x1="709.8" y1="563.9" x2="703.7" y2="592.6" stroke="#646c9e" stroke-width="3.80"/>
<line x1="696.4" y1="545.3" x2="691.4" y2="573.2" stroke="#646c9e" stroke-width="3.60"/>
<line x1="684.4" y1="528.5" x2="680.3" y2="555.7" stroke="#646c9e" stroke-width="3.41"/>
<line x1="673.5" y1="513.4" x2="670.2" y2="539.8" stroke="#646c9e" stroke-width="3.25"/>
<line x1="796.7" y1="608.8" x2="787.0" y2="638.9" stroke="#646c9e" stroke-width="4.27"/>
<line x1="776.5" y1="585.3" x2="768.5" y2="614.5" stroke="#646c9e" stroke-width="4.02"/>
<line x1="758.6" y1="564.4" x2="752.0" y2="592.9" stroke="#646c9e" stroke-width="3.79"/>
<line x1="742.6" y1="545.8" x2="737.1" y2="573.4" stroke="#646c9e" stroke-width="3.59"/>
<line x1="728.3" y1="529.0" x2="723.8" y2="555.9" stroke="#646c9e" stroke-width="3.41"/>
<line x1="715.3" y1="513.8" x2="711.7" y2="540.0" stroke="#646c9e" stroke-width="3.25"/>
<line x1="851.6" y1="609.4" x2="841.3" y2="639.2" stroke="#646c9e" stroke-width="4.27"/>
<line x1="828.2" y1="585.8" x2="819.6" y2="614.8" stroke="#646c9e" stroke-width="4.02"/>
<line x1="807.4" y1="564.9" x2="800.2" y2="593.1" stroke="#646c9e" stroke-width="3.79"/>
<line x1="788.9" y1="546.2" x2="782.9" y2="573.6" stroke="#646c9e" stroke-width="3.59"/>
<line x1="772.2" y1="529.5" x2="767.3" y2="556.1" stroke="#646c9e" stroke-width="3.41"/>
<line x1="757.1" y1="514.3" x2="753.2" y2="540.2" stroke="#646c9e" stroke-width="3.24"/>
<line x1="906.6" y1="609.9" x2="895.5" y2="639.4" stroke="#646c9e" stroke-width="4.26"/>
<line x1="879.9" y1="586.3" x2="870.7" y2="615.1" stroke="#646c9e" stroke-width="4.01"/>
<line x1="856.2" y1="565.4" x2="848.6" y2="593.3" stroke="#646c9e" stroke-width="3.79"/>
<line x1="835.0" y1="546.7" x2="828.7" y2="573.9" stroke="#646c9e" stroke-width="3.58"/>
<line x1="816.0" y1="529.9" x2="810.9" y2="556.3" stroke="#646c9e" stroke-width="3.40"/>
<line x1="798.8" y1="514.7" x2="794.7" y2="540.4" stroke="#646c9e" stroke-width="3.24"/>
<polyline points="22.5,643.9 29.5,634.9 39.5,644.9 22.5,643.9 28.5,648.9 39.5,644.9" fill="none" stroke="#505050" stroke-width="1.30" stroke-linejoin="round"/>
<line x1="29.5" y1="634.9" x2="28.5" y2="648.9" stroke="#505050" stroke-width="1.30"/>
<polyline points="48.1,619.3 54.7,610.9 64.1,620.3 48.1,619.3 53.7,624.0 64.1,620.3" fill="none" stroke="#505050" stroke-width="1.22" stroke-linejoin="round"/>
<line x1="54.7" y1="610.9" x2="53.7" y2="624.0" stroke="#505050" stroke-width="1.22"/>
<polyline points="70.9,597.4 77.1,589.4 85.9,598.3 70.9,597.4 76.2,601.8 85.9,598.3" fill="none" stroke="#505050" stroke-width="1.15" stroke-linejoin="round"/>
<line x1="77.1" y1="589.4" x2="76.2" y2="601.8" stroke="#505050" stroke-width="1.15"/>
<polyline points="91.3,577.7 97.2,570.2 105.6,578.6 91.3,577.7 96.3,581.9 105.6,578.6" fill="none" stroke="#505050" stroke-width="1.09" stroke-linejoin="round"/>
<line x1="97.2" y1="570.2" x2="96.3" y2="581.9" stroke="#505050" stroke-width="1.09"/>
<polyline points="109.7,560.0 115.3,552.9 123.2,560.8 109.7,560.0 114.5,564.0 123.2,560.8" fill="none" stroke="#505050" stroke-width="1.03" stroke-linejoin="round"/>
<line x1="115.3" y1="552.9" x2="114.5" y2="564.0" stroke="#505050" stroke-width="1.03"/>
<polyline points="126.4,543.9 131.7,537.1 139.3,544.7 126.4,543.9 131.0,547.7 139.3,544.7" fill="none" stroke="#505050" stroke-width="0.98" stroke-linejoin="round"/>
<line x1="131.7" y1="537.1" x2="131.0" y2="547.7" stroke="#505050" stroke-width="0.98"/>
<polyline points="76.5,644.2 83.5,635.2 93.5,645.2 76.5,644.2 82.5,649.2 93.5,645.2" fill="none" stroke="#505050" stroke-width="1.30" stroke-linejoin="round"/>
<line x1="83.5" y1="635.2" x2="82.5" y2="649.2" stroke="#505050" stroke-width="1.30"/>
<polyline points="99.0,619.6 105.6,611.1 114.9,620.5 99.0,619.6 104.6,624.3 114.9,620.5" fill="none" stroke="#505050" stroke-width="1.22" stroke-linejoin="round"/>
<line x1="105.6" y1="611.1" x2="104.6" y2="624.3" stroke="#505050" stroke-width="1.22"/>
<polyline points="119.0,597.6 125.2,589.7 134.1,598.5 119.0,597.6 124.3,602.1 134.1,598.5" fill="none" stroke="#505050" stroke-width="1.15" stroke-linejoin="round"/>
<line x1="125.2" y1="589.7" x2="124.3" y2="602.1" stroke="#505050" stroke-width="1.15"/>
<polyline points="137.0,578.0 142.8,570.4 151.2,578.8 137.0,578.0 142.0,582.1 151.2,578.8" fill="none" stroke="#505050" stroke-width="1.09" stroke-linejoin="round"/>
<line x1="142.8" y1="570.4" x2="142.0" y2="582.1" stroke="#505050" stroke-width="1.09"/>
<polyline points="153.1,560.2 158.7,553.1 166.6,561.0 153.1,560.2 157.9,564.2 166.6,561.0" fill="none" stroke="#505050" stroke-width="1.03" stroke-linejoin="round"/>
<line x1="158.7" y1="553.1" x2="157.9" y2="564.2" stroke="#505050" stroke-width="1.03"/>
<polyline points="167.8,544.1 173.1,537.3 180.6,544.9 167.8,544.1 172.3,547.9 180.6,544.9" fill="none" stroke="#505050" stroke-width="0.98" stroke-linejoin="round"/>
<line x1="173.1" y1="537.3" x2="172.3" y2="547.9" stroke="#505050" stroke-width="0.98"/>
<polyline points="130.6,644.5 137.6,635.5 147.5,645.5 130.6,644.5 136.6,649.5 147.5,645.5" fill="none" stroke="#505050" stroke-width="1.30" stroke-linejoin="round"/>
<line x1="137.6" y1="635.5" x2="136.6" y2="649.5" stroke="#505050" stroke-width="1.30"/>
<polyline points="149.9,619.8 156.5,611.4 165.9,620.8 149.9,619.8 155.6,624.5 165.9,620.8" fill="none" stroke="#505050" stroke-width="1.22" stroke-linejoin="round"/>
<line x1="156.5" y1="611.4" x2="155.6" y2="624.5" stroke="#505050" stroke-width="1.22"/>
<polyline points="167.2,597.9 173.4,589.9 182.2,598.7 167.2,597.9 172.5,602.3 182.2,598.7" fill="none" stroke="#505050" stroke-width="1.15" stroke-linejoin="round"/>
<line x1="173.4" y1="589.9" x2="172.5" y2="602.3" stroke="#505050" stroke-width="1.15"/>
<polyline points="182.6,578.2 188.5,570.7 196.8,579.0 182.6,578.2 187.6,582.4 196.8,579.0" fill="none" stroke="#505050" stroke-width="1.09" stroke-linejoin="round"/>
<line x1="188.5" y1="570.7" x2="187.6" y2="582.4" stroke="#505050" stroke-width="1.09"/>
<polyline points="196.6,560.4 202.1,553.3 210.0,561.2 196.6,560.4 201.3,564.4 210.0,561.2" fill="none" stroke="#505050" stroke-width="1.03" stroke-linejoin="round"/>
<line x1="202.1" y1="553.3" x2="201.3" y2="564.4" stroke="#505050" stroke-width="1.03"/>
<polyline points="209.2,544.3 214.5,537.6 222.0,545.1 209.2,544.3 213.7,548.1 222.0,545.1" fill="none" stroke="#505050" stroke-width="0.98" stroke-linejoin="round"/>
<line x1="214.5" y1="537.6" x2="213.7" y2="548.1" stroke="#505050" stroke-width="0.98"/>
<polyline points="184.6,644.7 191.6,635.8 201.6,645.7 184.6,644.7 190.6,649.7 201.6,645.7" fill="none" stroke="#505050" stroke-width="1.29" stroke-linejoin="round"/>
<line x1="191.6" y1="635.8" x2="190.6" y2="649.7" stroke="#505050" stroke-width="1.29"/>
<polyline points="200.9,620.1 207.4,611.7 216.8,621.0 200.9,620.1 206.5,624.8 216.8,621.0" fill="none" stroke="#505050" stroke-width="1.22" stroke-linejoin="round"/>
<line x1="207.4" y1="611.7" x2="206.5" y2="624.8" stroke="#505050" stroke-width="1.22"/>
<polyline points="215.3,598.1 221.5,590.2 230.3,599.0 215.3,598.1 220.6,602.5 230.3,599.0" fill="none" stroke="#505050" stroke-width="1.15" stroke-linejoin="round"/>
<line x1="221.5" y1="590.2" x2="220.6" y2="602.5" stroke="#505050" stroke-width="1.15"/>
<polyline points="228.3,578.4 234.1,570.9 242.5,579.2 228.3,578.4 233.3,582.6 242.5,579.2" fill="none" stroke="#505050" stroke-width="1.09" stroke-linejoin="round"/>
<line x1="234.1" y1="570.9" x2="233.3" y2="582.6" stroke="#505050" stroke-width="1.09"/>
<polyline points="240.0,560.6 245.5,553.5 253.5,561.4 240.0,560.6 244.7,564.6 253.5,561.4" fill="none" stroke="#505050" stroke-width="1.03" stroke-linejoin="round"/>
<line x1="245.5" y1="553.5" x2="244.7" y2="564.6" stroke="#505050" stroke-width="1.03"/>
<polyline points="250.6,544.5 255.9,537.8 263.4,545.3 250.6,544.5 255.1,548.3 263.4,545.3" fill="none" stroke="#505050" stroke-width="0.98" stroke-linejoin="round"/>
<line x1="255.9" y1="537.8" x2="255.1" y2="548.3" stroke="#505050" stroke-width="0.98"/>
<polyline points="238.7,645.0 245.7,636.1 255.6,646.0 238.7,645.0 244.7,650.0 255.6,646.0" fill="none" stroke="#505050" stroke-width="1.29" stroke-linejoin="round"/>
<line x1="245.7" y1="636.1" x2="244.7" y2="650.0" stroke="#505050" stroke-width="1.29"/>
<polyline points="251.8,620.3 258.4,611.9 267.7,621.3 251.8,620.3 257.4,625.0 267.7,621.3" fill="none" stroke="#505050" stroke-width="1.22" stroke-linejoin="round"/>
<line x1="258.4" y1="611.9" x2="257.4" y2="625.0" stroke="#505050" stroke-width="1.22"/>
<polyline points="263.5,598.3 269.7,590.4 278.5,599.2 263.5,598.3 268.8,602.7 278.5,599.2" fill="none" stroke="#505050" stroke-width="1.15" stroke-linejoin="round"/>
<line x1="269.7" y1="590.4" x2="268.8" y2="602.7" stroke="#505050" stroke-width="1.15"/>
<polyline points="274.0,578.6 279.8,571.1 288.2,579.5 274.0,578.6 279.0,582.8 288.2,579.5" fill="none" stroke="#505050" stroke-width="1.08" stroke-linejoin="round"/>
<line x1="279.8" y1="571.1" x2="279.0" y2="582.8" stroke="#505050" stroke-width="1.08"/>
<polyline points="283.4,560.9 289.0,553.7 296.9,561.6 283.4,560.9 288.2,564.8 296.9,561.6" fill="none" stroke="#505050" stroke-width="1.03" stroke-linejoin="round"/>
<line x1="289.0" y1="553.7" x2="288.2" y2="564.8" stroke="#505050" stroke-width="1.03"/>
<polyline points="292.0,544.7 297.3,538.0 304.8,545.5 292.0,544.7 296.5,548.5 304.8,545.5" fill="none" stroke="#505050" stroke-width="0.98" stroke-linejoin="round"/>
<line x1="297.3" y1="538.0" x2="296.5" y2="548.5" stroke="#505050" stroke-width="0.98"/>
<polyline points="292.8,645.3 299.7,636.3 309.7,646.3 292.8,645.3 298.7,650.2 309.7,646.3" fill="none" stroke="#505050" stroke-width="1.29" stroke-linejoin="round"/>
<line x1="299.7" y1="636.3" x2="298.7" y2="650.2" stroke="#505050" stroke-width="1.29"/>
<polyline points="302.8,620.6 309.3,612.2 318.7,621.5 302.8,620.6 308.4,625.2 318.7,621.5" fill="none" stroke="#505050" stroke-width="1.21" stroke-linejoin="round"/>
<line x1="309.3" y1="612.2" x2="308.4" y2="625.2" stroke="#505050" stroke-width="1.21"/>
<polyline points="311.7,598.6 317.9,590.6 326.7,599.5 311.7,598.6 317.0,603.0 326.7,599.5" fill="none" stroke="#505050" stroke-width="1.14" stroke-linejoin="round"/>
<line x1="317.9" y1="590.6" x2="317.0" y2="603.0" stroke="#505050" stroke-width="1.14"/>
<polyline points="319.7,578.8 325.5,571.3 333.8,579.7 319.7,578.8 324.7,583.0 333.8,579.7" fill="none" stroke="#505050" stroke-width="1.08" stroke-linejoin="round"/>
<line x1="325.5" y1="571.3" x2="324.7" y2="583.0" stroke="#505050" stroke-width="1.08"/>
<polyline points="326.9,561.1 332.4,553.9 340.3,561.9 326.9,561.1 331.6,565.0 340.3,561.9" fill="none" stroke="#505050" stroke-width="1.03" stroke-linejoin="round"/>
<line x1="332.4" y1="553.9" x2="331.6" y2="565.0" stroke="#505050" stroke-width="1.03"/>
<polyline points="333.4,544.9 338.7,538.2 346.2,545.7 333.4,544.9 337.9,548.7 346.2,545.7" fill="none" stroke="#505050" stroke-width="0.98" stroke-linejoin="round"/>
<line x1="338.7" y1="538.2" x2="337.9" y2="548.7" stroke="#505050" stroke-width="0.98"/>
<polyline points="353.8,620.8 360.3,612.4 369.6,621.8 353.8,620.8 359.4,625.5 369.6,621.8" fill="none" stroke="#505050" stroke-width="1.21" stroke-linejoin="round"/>
<line x1="360.3" y1="612.4" x2="359.4" y2="625.5" stroke="#505050" stroke-width="1.21"/>
<polyline points="359.9,598.8 366.0,590.9 374.8,599.7 359.9,598.8 365.2,603.2 374.8,599.7" fill="none" stroke="#505050" stroke-width="1.14" stroke-linejoin="round"/>
<line x1="366.0" y1="590.9" x2="365.2" y2="603.2" stroke="#505050" stroke-width="1.14"/>
<polyline points="365.4,579.1 371.2,571.6 379.5,579.9 365.4,579.1 370.4,583.2 379.5,579.9" fill="none" stroke="#505050" stroke-width="1.08" stroke-linejoin="round"/>
<line x1="371.2" y1="571.6" x2="370.4" y2="583.2" stroke="#505050" stroke-width="1.08"/>
<polyline points="370.3,561.3 375.9,554.2 383.8,562.1 370.3,561.3 375.1,565.2 383.8,562.1" fill="none" stroke="#505050" stroke-width="1.03" stroke-linejoin="round"/>
<line x1="375.9" y1="554.2" x2="375.1" y2="565.2" stroke="#505050" stroke-width="1.03"/>
<polyline points="374.8,545.1 380.1,538.4 387.6,545.9 374.8,545.1 379.3,548.9 387.6,545.9" fill="none" stroke="#505050" stroke-width="0.98" stroke-linejoin="round"/>
<line x1="380.1" y1="538.4" x2="379.3" y2="548.9" stroke="#505050" stroke-width="0.98"/>
<polyline points="401.0,645.8 407.9,636.9 417.8,646.8 401.0,645.8 406.9,650.8 417.8,646.8" fill="none" stroke="#505050" stroke-width="1.29" stroke-linejoin="round"/>
<line x1="407.9" y1="636.9" x2="406.9" y2="650.8" stroke="#505050" stroke-width="1.29"/>
<polyline points="404.7,621.1 411.3,612.7 420.6,622.0 404.7,621.1 410.3,625.7 420.6,622.0" fill="none" stroke="#505050" stroke-width="1.21" stroke-linejoin="round"/>
<line x1="411.3" y1="612.7" x2="410.3" y2="625.7" stroke="#505050" stroke-width="1.21"/>
<polyline points="408.1,599.0 414.2,591.1 423.0,599.9 408.1,599.0 413.4,603.4 423.0,599.9" fill="none" stroke="#505050" stroke-width="1.14" stroke-linejoin="round"/>
<line x1="414.2" y1="591.1" x2="413.4" y2="603.4" stroke="#505050" stroke-width="1.14"/>
<polyline points="411.1,579.3 416.9,571.8 425.2,580.1 411.1,579.3 416.1,583.4 425.2,580.1" fill="none" stroke="#505050" stroke-width="1.08" stroke-linejoin="round"/>
<line x1="416.9" y1="571.8" x2="416.1" y2="583.4" stroke="#505050" stroke-width="1.08"/>
<polyline points="413.8,561.5 419.3,554.4 427.2,562.3 413.8,561.5 418.5,565.4 427.2,562.3" fill="none" stroke="#505050" stroke-width="1.03" stroke-linejoin="round"/>
<line x1="419.3" y1="554.4" x2="418.5" y2="565.4" stroke="#505050" stroke-width="1.03"/>
<polyline points="416.2,545.3 421.5,538.6 429.0,546.1 416.2,545.3 420.7,549.1 429.0,546.1" fill="none" stroke="#505050" stroke-width="0.98" stroke-linejoin="round"/>
<line x1="421.5" y1="538.6" x2="420.7" y2="549.1" stroke="#505050" stroke-width="0.98"/>
<polyline points="455.1,646.1 462.0,637.2 471.9,647.1 455.1,646.1 461.1,651.0 471.9,647.1" fill="none" stroke="#505050" stroke-width="1.29" stroke-linejoin="round"/>
<line x1="462.0" y1="637.2" x2="461.1" y2="651.0" stroke="#505050" stroke-width="1.29"/>
<polyline points="455.7,621.3 462.3,613.0 471.6,622.3 455.7,621.3 461.3,626.0 471.6,622.3" fill="none" stroke="#505050" stroke-width="1.21" stroke-linejoin="round"/>
<line x1="462.3" y1="613.0" x2="461.3" y2="626.0" stroke="#505050" stroke-width="1.21"/>
<polyline points="456.3,599.3 462.5,591.4 471.2,600.2 456.3,599.3 461.6,603.7 471.2,600.2" fill="none" stroke="#505050" stroke-width="1.14" stroke-linejoin="round"/>
<line x1="462.5" y1="591.4" x2="461.6" y2="603.7" stroke="#505050" stroke-width="1.14"/>
<polyline points="456.8,579.5 462.6,572.0 470.9,580.3 456.8,579.5 461.8,583.7 470.9,580.3" fill="none" stroke="#505050" stroke-width="1.08" stroke-linejoin="round"/>
<line x1="462.6" y1="572.0" x2="461.8" y2="583.7" stroke="#505050" stroke-width="1.08"/>
<polyline points="457.3,561.7 462.8,554.6 470.7,562.5 457.3,561.7 462.0,565.6 470.7,562.5" fill="none" stroke="#505050" stroke-width="1.03" stroke-linejoin="round"/>
<line x1="462.8" y1="554.6" x2="462.0" y2="565.6" stroke="#505050" stroke-width="1.03"/>
<polyline points="457.7,545.5 462.9,538.8 470.4,546.3 457.7,545.5 462.2,549.3 470.4,546.3" fill="none" stroke="#505050" stroke-width="0.98" stroke-linejoin="round"/>
<line x1="462.9" y1="538.8" x2="462.2" y2="549.3" stroke="#505050" stroke-width="0.98"/>
<polyline points="509.3,646.4 516.2,637.5 526.1,647.4 509.3,646.4 515.2,651.3 526.1,647.4" fill="none" stroke="#505050" stroke-width="1.29" stroke-linejoin="round"/>
<line x1="516.2" y1="637.5" x2="515.2" y2="651.3" stroke="#505050" stroke-width="1.29"/>
<polyline points="506.8,621.6 513.3,613.2 522.6,622.5 506.8,621.6 512.3,626.2 522.6,622.5" fill="none" stroke="#505050" stroke-width="1.21" stroke-linejoin="round"/>
<line x1="513.3" y1="613.2" x2="512.3" y2="626.2" stroke="#505050" stroke-width="1.21"/>
<polyline points="504.5,599.5 510.7,591.6 519.4,600.4 504.5,599.5 509.8,603.9 519.4,600.4" fill="none" stroke="#505050" stroke-width="1.14" stroke-linejoin="round"/>
<line x1="510.7" y1="591.6" x2="509.8" y2="603.9" stroke="#505050" stroke-width="1.14"/>
<polyline points="502.5,579.7 508.4,572.3 516.7,580.6 502.5,579.7 507.5,583.9 516.7,580.6" fill="none" stroke="#505050" stroke-width="1.08" stroke-linejoin="round"/>
<line x1="508.4" y1="572.3" x2="507.5" y2="583.9" stroke="#505050" stroke-width="1.08"/>
<polyline points="500.7,561.9 506.3,554.8 514.1,562.7 500.7,561.9 505.5,565.8 514.1,562.7" fill="none" stroke="#505050" stroke-width="1.02" stroke-linejoin="round"/>
<line x1="506.3" y1="554.8" x2="505.5" y2="565.8" stroke="#505050" stroke-width="1.02"/>
<polyline points="499.1,545.7 504.4,539.0 511.9,546.5 499.1,545.7 503.6,549.5 511.9,546.5" fill="none" stroke="#505050" stroke-width="0.97" stroke-linejoin="round"/>
<line x1="504.4" y1="539.0" x2="503.6" y2="549.5" stroke="#505050" stroke-width="0.97"/>
<polyline points="617.6,646.9 624.5,638.0 634.3,647.9 617.6,646.9 623.5,651.8 634.3,647.9" fill="none" stroke="#505050" stroke-width="1.28" stroke-linejoin="round"/>
<line x1="624.5" y1="638.0" x2="623.5" y2="651.8" stroke="#505050" stroke-width="1.28"/>
<polyline points="608.8,622.1 615.3,613.7 624.6,623.0 608.8,622.1 614.4,626.7 624.6,623.0" fill="none" stroke="#505050" stroke-width="1.21" stroke-linejoin="round"/>
<line x1="615.3" y1="613.7" x2="614.4" y2="626.7" stroke="#505050" stroke-width="1.21"/>
<polyline points="601.0,600.0 607.2,592.1 615.9,600.9 601.0,600.0 606.3,604.4 615.9,600.9" fill="none" stroke="#505050" stroke-width="1.14" stroke-linejoin="round"/>
<line x1="607.2" y1="592.1" x2="606.3" y2="604.4" stroke="#505050" stroke-width="1.14"/>
<polyline points="594.0,580.2 599.8,572.7 608.1,581.0 594.0,580.2 599.0,584.3 608.1,581.0" fill="none" stroke="#505050" stroke-width="1.08" stroke-linejoin="round"/>
<line x1="599.8" y1="572.7" x2="599.0" y2="584.3" stroke="#505050" stroke-width="1.08"/>
<polyline points="587.7,562.3 593.2,555.2 601.1,563.1 587.7,562.3 592.5,566.3 601.1,563.1" fill="none" stroke="#505050" stroke-width="1.02" stroke-linejoin="round"/>
<line x1="593.2" y1="555.2" x2="592.5" y2="566.3" stroke="#505050" stroke-width="1.02"/>
<polyline points="582.0,546.1 587.3,539.4 594.7,546.9 582.0,546.1 586.5,549.9 594.7,546.9" fill="none" stroke="#505050" stroke-width="0.97" stroke-linejoin="round"/>
<line x1="587.3" y1="539.4" x2="586.5" y2="549.9" stroke="#505050" stroke-width="0.97"/>
<polyline points="671.8,647.2 678.7,638.3 688.5,648.2 671.8,647.2 677.7,652.1 688.5,648.2" fill="none" stroke="#505050" stroke-width="1.28" stroke-linejoin="round"/>
<line x1="678.7" y1="638.3" x2="677.7" y2="652.1" stroke="#505050" stroke-width="1.28"/>
<polyline points="659.9,622.3 666.4,614.0 675.6,623.3 659.9,622.3 665.4,627.0 675.6,623.3" fill="none" stroke="#505050" stroke-width="1.20" stroke-linejoin="round"/>
<line x1="666.4" y1="614.0" x2="665.4" y2="627.0" stroke="#505050" stroke-width="1.20"/>
<polyline points="649.3,600.2 655.4,592.4 664.2,601.1 649.3,600.2 654.5,604.6 664.2,601.1" fill="none" stroke="#505050" stroke-width="1.14" stroke-linejoin="round"/>
<line x1="655.4" y1="592.4" x2="654.5" y2="604.6" stroke="#505050" stroke-width="1.14"/>
<polyline points="639.8,580.4 645.6,573.0 653.9,581.2 639.8,580.4 644.8,584.5 653.9,581.2" fill="none" stroke="#505050" stroke-width="1.08" stroke-linejoin="round"/>
<line x1="645.6" y1="573.0" x2="644.8" y2="584.5" stroke="#505050" stroke-width="1.08"/>
<polyline points="631.2,562.5 636.7,555.5 644.6,563.3 631.2,562.5 636.0,566.5 644.6,563.3" fill="none" stroke="#505050" stroke-width="1.02" stroke-linejoin="round"/>
<line x1="636.7" y1="555.5" x2="636.0" y2="566.5" stroke="#505050" stroke-width="1.02"/>
<polyline points="623.5,546.3 628.7,539.6 636.2,547.1 623.5,546.3 628.0,550.1 636.2,547.1" fill="none" stroke="#505050" stroke-width="0.97" stroke-linejoin="round"/>
<line x1="628.7" y1="539.6" x2="628.0" y2="550.1" stroke="#505050" stroke-width="0.97"/>
<polyline points="726.0,647.4 732.8,638.6 742.7,648.4 726.0,647.4 731.9,652.4 742.7,648.4" fill="none" stroke="#505050" stroke-width="1.28" stroke-linejoin="round"/>
<line x1="732.8" y1="638.6" x2="731.9" y2="652.4" stroke="#505050" stroke-width="1.28"/>
<polyline points="710.9,622.6 717.4,614.3 726.7,623.5 710.9,622.6 716.5,627.2 726.7,623.5" fill="none" stroke="#505050" stroke-width="1.20" stroke-linejoin="round"/>
<line x1="717.4" y1="614.3" x2="716.5" y2="627.2" stroke="#505050" stroke-width="1.20"/>
<polyline points="697.6,600.5 703.7,592.6 712.4,601.3 697.6,600.5 702.8,604.8 712.4,601.3" fill="none" stroke="#505050" stroke-width="1.14" stroke-linejoin="round"/>
<line x1="703.7" y1="592.6" x2="702.8" y2="604.8" stroke="#505050" stroke-width="1.14"/>
<polyline points="685.6,580.6 691.4,573.2 699.6,581.5 685.6,580.6 690.5,584.8 699.6,581.5" fill="none" stroke="#505050" stroke-width="1.07" stroke-linejoin="round"/>
<line x1="691.4" y1="573.2" x2="690.5" y2="584.8" stroke="#505050" stroke-width="1.07"/>
<polyline points="674.8,562.7 680.3,555.7 688.1,563.5 674.8,562.7 679.5,566.7 688.1,563.5" fill="none" stroke="#505050" stroke-width="1.02" stroke-linejoin="round"/>
<line x1="680.3" y1="555.7" x2="679.5" y2="566.7" stroke="#505050" stroke-width="1.02"/>
<polyline points="665.0,546.5 670.2,539.8 677.7,547.3 665.0,546.5 669.4,550.3 677.7,547.3" fill="none" stroke="#505050" stroke-width="0.97" stroke-linejoin="round"/>
<line x1="670.2" y1="539.8" x2="669.4" y2="550.3" stroke="#505050" stroke-width="0.97"/>
<polyline points="780.2,647.7 787.0,638.9 796.9,648.7 780.2,647.7 786.1,652.6 796.9,648.7" fill="none" stroke="#505050" stroke-width="1.28" stroke-linejoin="round"/>
<line x1="787.0" y1="638.9" x2="786.1" y2="652.6" stroke="#505050" stroke-width="1.28"/>
<polyline points="762.0,622.9 768.5,614.5 777.7,623.8 762.0,622.9 767.6,627.5 777.7,623.8" fill="none" stroke="#505050" stroke-width="1.20" stroke-linejoin="round"/>
<line x1="768.5" y1="614.5" x2="767.6" y2="627.5" stroke="#505050" stroke-width="1.20"/>
<polyline points="745.9,600.7 752.0,592.9 760.7,601.6 745.9,600.7 751.1,605.1 760.7,601.6" fill="none" stroke="#505050" stroke-width="1.13" stroke-linejoin="round"/>
<line x1="752.0" y1="592.9" x2="751.1" y2="605.1" stroke="#505050" stroke-width="1.13"/>
<polyline points="731.4,580.9 737.1,573.4 745.4,581.7 731.4,580.9 736.3,585.0 745.4,581.7" fill="none" stroke="#505050" stroke-width="1.07" stroke-linejoin="round"/>
<line x1="737.1" y1="573.4" x2="736.3" y2="585.0" stroke="#505050" stroke-width="1.07"/>
<polyline points="718.3,563.0 723.8,555.9 731.6,563.7 718.3,563.0 723.0,566.9 731.6,563.7" fill="none" stroke="#505050" stroke-width="1.02" stroke-linejoin="round"/>
<line x1="723.8" y1="555.9" x2="723.0" y2="566.9" stroke="#505050" stroke-width="1.02"/>
<polyline points="706.4,546.7 711.7,540.0 719.1,547.5 706.4,546.7 710.9,550.5 719.1,547.5" fill="none" stroke="#505050" stroke-width="0.97" stroke-linejoin="round"/>
<line x1="711.7" y1="540.0" x2="710.9" y2="550.5" stroke="#505050" stroke-width="0.97"/>
<polyline points="834.4,648.0 841.3,639.2 851.1,649.0 834.4,648.0 840.3,652.9 851.1,649.0" fill="none" stroke="#505050" stroke-width="1.28" stroke-linejoin="round"/>
<line x1="841.3" y1="639.2" x2="840.3" y2="652.9" stroke="#505050" stroke-width="1.28"/>
<polyline points="813.1,623.1 819.6,614.8 828.8,624.0 813.1,623.1 818.6,627.7 828.8,624.0" fill="none" stroke="#505050" stroke-width="1.20" stroke-linejoin="round"/>
<line x1="819.6" y1="614.8" x2="818.6" y2="627.7" stroke="#505050" stroke-width="1.20"/>
<polyline points="794.2,600.9 800.2,593.1 809.0,601.8 794.2,600.9 799.4,605.3 809.0,601.8" fill="none" stroke="#505050" stroke-width="1.13" stroke-linejoin="round"/>
<line x1="800.2" y1="593.1" x2="799.4" y2="605.3" stroke="#505050" stroke-width="1.13"/>
<polyline points="777.2,581.1 782.9,573.6 791.2,581.9 777.2,581.1 782.1,585.2 791.2,581.9" fill="none" stroke="#505050" stroke-width="1.07" stroke-linejoin="round"/>
<line x1="782.9" y1="573.6" x2="782.1" y2="585.2" stroke="#505050" stroke-width="1.07"/>
<polyline points="761.8,563.2 767.3,556.1 775.1,563.9 761.8,563.2 766.5,567.1 775.1,563.9" fill="none" stroke="#505050" stroke-width="1.02" stroke-linejoin="round"/>
<line x1="767.3" y1="556.1" x2="766.5" y2="567.1" stroke="#505050" stroke-width="1.02"/>
<polyline points="747.9,546.9 753.2,540.2 760.6,547.7 747.9,546.9 752.4,550.7 760.6,547.7" fill="none" stroke="#505050" stroke-width="0.97" stroke-linejoin="round"/>
<line x1="753.2" y1="540.2" x2="752.4" y2="550.7" stroke="#505050" stroke-width="0.97"/>
<polyline points="888.6,648.3 895.5,639.4 905.3,649.2 888.6,648.3 894.5,653.2 905.3,649.2" fill="none" stroke="#505050" stroke-width="1.27" stroke-linejoin="round"/>
<line x1="895.5" y1="639.4" x2="894.5" y2="653.2" stroke="#505050" stroke-width="1.27"/>
<polyline points="864.2,623.4 870.7,615.1 879.9,624.3 864.2,623.4 869.7,628.0 879.9,624.3" fill="none" stroke="#505050" stroke-width="1.20" stroke-linejoin="round"/>
<line x1="870.7" y1="615.1" x2="869.7" y2="628.0" stroke="#505050" stroke-width="1.20"/>
<polyline points="842.5,601.2 848.6,593.3 857.3,602.0 842.5,601.2 847.7,605.5 857.3,602.0" fill="none" stroke="#505050" stroke-width="1.13" stroke-linejoin="round"/>
<line x1="848.6" y1="593.3" x2="847.7" y2="605.5" stroke="#505050" stroke-width="1.13"/>
<polyline points="823.0,581.3 828.7,573.9 837.0,582.1 823.0,581.3 827.9,585.4 837.0,582.1" fill="none" stroke="#505050" stroke-width="1.07" stroke-linejoin="round"/>
<line x1="828.7" y1="573.9" x2="827.9" y2="585.4" stroke="#505050" stroke-width="1.07"/>
<polyline points="805.4,563.4 810.9,556.3 818.7,564.2 805.4,563.4 810.1,567.3 818.7,564.2" fill="none" stroke="#505050" stroke-width="1.02" stroke-linejoin="round"/>
<line x1="810.9" y1="556.3" x2="810.1" y2="567.3" stroke="#505050" stroke-width="1.02"/>
<polyline points="789.4,547.1 794.7,540.4 802.1,547.9 789.4,547.1 793.9,550.9 802.1,547.9" fill="none" stroke="#505050" stroke-width="0.97" stroke-linejoin="round"/>
<line x1="794.7" y1="540.4" x2="793.9" y2="550.9" stroke="#505050" stroke-width="0.97"/>
</g>
<polygon points="102.0,547.5 291.0,550.0 291.0,555.0 102.0,552.5" fill="#5e6698" fill-opacity="0.55"/>
<polygon points="634.0,551.0 724.0,552.0 724.0,559.0 634.0,558.0" fill="#5e6698" fill-opacity="0.55"/>
<line x1="90.0" y1="575.0" x2="136.0" y2="525.0" stroke="#5e6698" stroke-width="4.50" stroke-opacity="0.5"/>
<line x1="309.0" y1="612.0" x2="332.0" y2="560.0" stroke="#5e6698" stroke-width="5.00" stroke-opacity="0.55"/>
<line x1="20.9" y1="602.7" x2="127.5" y2="508.9" stroke="#5a6088" stroke-width="1.20"/>
<line x1="39.6" y1="602.9" x2="141.7" y2="509.1" stroke="#5a6088" stroke-width="1.20"/>
<line x1="58.3" y1="603.0" x2="155.8" y2="509.2" stroke="#5a6088" stroke-width="1.20"/>
<line x1="76.9" y1="603.2" x2="169.9" y2="509.3" stroke="#5a6088" stroke-width="1.20"/>
<line x1="95.6" y1="603.3" x2="184.1" y2="509.4" stroke="#5a6088" stroke-width="1.20"/>
<line x1="114.3" y1="603.5" x2="198.2" y2="509.5" stroke="#5a6088" stroke-width="1.20"/>
<line x1="132.9" y1="603.6" x2="212.3" y2="509.6" stroke="#5a6088" stroke-width="1.20"/>
<line x1="151.6" y1="603.8" x2="226.4" y2="509.8" stroke="#5a6088" stroke-width="1.20"/>
<line x1="170.2" y1="603.9" x2="240.6" y2="509.9" stroke="#5a6088" stroke-width="1.20"/>
<line x1="188.8" y1="604.0" x2="254.7" y2="510.0" stroke="#5a6088" stroke-width="1.20"/>
<line x1="207.4" y1="604.2" x2="268.8" y2="510.1" stroke="#5a6088" stroke-width="1.20"/>
<line x1="226.0" y1="604.3" x2="282.9" y2="510.2" stroke="#5a6088" stroke-width="1.20"/>
<line x1="244.6" y1="604.4" x2="297.0" y2="510.3" stroke="#5a6088" stroke-width="1.20"/>
<line x1="263.2" y1="604.5" x2="311.1" y2="510.3" stroke="#5a6088" stroke-width="1.20"/>
<line x1="281.8" y1="604.6" x2="325.2" y2="510.4" stroke="#5a6088" stroke-width="1.20"/>
<line x1="300.4" y1="604.8" x2="339.2" y2="510.5" stroke="#5a6088" stroke-width="1.20"/>
<line x1="19.7" y1="604.8" x2="298.7" y2="607.5" stroke="#4c58a2" stroke-width="1.70"/>
<line x1="46.2" y1="581.3" x2="308.4" y2="583.9" stroke="#4c58a2" stroke-width="1.70"/>
<line x1="69.6" y1="560.5" x2="316.9" y2="563.0" stroke="#4c58a2" stroke-width="1.70"/>
<line x1="90.6" y1="541.9" x2="324.5" y2="544.3" stroke="#4c58a2" stroke-width="1.70"/>
<line x1="109.4" y1="525.2" x2="331.4" y2="527.5" stroke="#4c58a2" stroke-width="1.70"/>
<line x1="126.3" y1="510.1" x2="337.6" y2="512.4" stroke="#4c58a2" stroke-width="1.70"/>
<line x1="304.1" y1="595.7" x2="339.2" y2="510.5" stroke="#5a6088" stroke-width="1.20"/>
<line x1="322.3" y1="595.8" x2="353.3" y2="510.6" stroke="#5a6088" stroke-width="1.20"/>
<line x1="340.4" y1="595.9" x2="367.4" y2="510.7" stroke="#5a6088" stroke-width="1.20"/>
<line x1="358.5" y1="596.0" x2="381.4" y2="510.7" stroke="#5a6088" stroke-width="1.20"/>
<line x1="376.6" y1="596.1" x2="395.5" y2="510.8" stroke="#5a6088" stroke-width="1.20"/>
<line x1="394.7" y1="596.2" x2="409.5" y2="510.9" stroke="#5a6088" stroke-width="1.20"/>
<line x1="412.8" y1="596.3" x2="423.6" y2="510.9" stroke="#5a6088" stroke-width="1.20"/>
<line x1="302.5" y1="598.3" x2="411.0" y2="599.3" stroke="#4c58a2" stroke-width="1.70"/>
<line x1="308.4" y1="583.9" x2="412.8" y2="584.9" stroke="#4c58a2" stroke-width="1.70"/>
<line x1="316.9" y1="563.0" x2="415.4" y2="564.0" stroke="#4c58a2" stroke-width="1.70"/>
<line x1="324.5" y1="544.3" x2="417.8" y2="545.3" stroke="#4c58a2" stroke-width="1.70"/>
<line x1="331.4" y1="527.5" x2="419.9" y2="528.5" stroke="#4c58a2" stroke-width="1.70"/>
<line x1="337.6" y1="512.4" x2="421.8" y2="513.3" stroke="#4c58a2" stroke-width="1.70"/>
<line x1="411.6" y1="605.4" x2="423.6" y2="510.9" stroke="#5a6088" stroke-width="1.20"/>
<line x1="430.2" y1="605.5" x2="437.6" y2="511.0" stroke="#5a6088" stroke-width="1.20"/>
<line x1="448.6" y1="605.5" x2="451.6" y2="511.1" stroke="#5a6088" stroke-width="1.20"/>
<line x1="467.1" y1="605.6" x2="465.6" y2="511.1" stroke="#5a6088" stroke-width="1.20"/>
<line x1="485.6" y1="605.7" x2="479.6" y2="511.2" stroke="#5a6088" stroke-width="1.20"/>
<line x1="504.0" y1="605.8" x2="493.6" y2="511.3" stroke="#5a6088" stroke-width="1.20"/>
<line x1="522.5" y1="605.9" x2="507.6" y2="511.3" stroke="#5a6088" stroke-width="1.20"/>
<line x1="409.9" y1="608.5" x2="520.7" y2="609.6" stroke="#4c58a2" stroke-width="1.70"/>
<line x1="412.8" y1="584.9" x2="517.0" y2="585.9" stroke="#4c58a2" stroke-width="1.70"/>
<line x1="415.4" y1="563.9" x2="513.8" y2="564.9" stroke="#4c58a2" stroke-width="1.70"/>
<line x1="417.8" y1="545.2" x2="510.8" y2="546.2" stroke="#4c58a2" stroke-width="1.70"/>
<line x1="419.9" y1="528.4" x2="508.2" y2="529.4" stroke="#4c58a2" stroke-width="1.70"/>
<line x1="421.8" y1="513.3" x2="505.8" y2="514.2" stroke="#4c58a2" stroke-width="1.70"/>
<line x1="520.8" y1="595.2" x2="508.8" y2="518.7" stroke="#5a6088" stroke-width="1.20"/>
<line x1="538.7" y1="595.3" x2="523.1" y2="518.7" stroke="#5a6088" stroke-width="1.20"/>
<line x1="556.7" y1="595.4" x2="537.4" y2="518.8" stroke="#5a6088" stroke-width="1.20"/>
<line x1="574.6" y1="595.5" x2="551.7" y2="518.9" stroke="#5a6088" stroke-width="1.20"/>
<line x1="592.5" y1="595.6" x2="566.0" y2="519.0" stroke="#5a6088" stroke-width="1.20"/>
<line x1="610.4" y1="595.7" x2="580.3" y2="519.0" stroke="#5a6088" stroke-width="1.20"/>
<line x1="628.2" y1="595.8" x2="594.6" y2="519.1" stroke="#5a6088" stroke-width="1.20"/>
<line x1="519.0" y1="598.7" x2="626.6" y2="599.8" stroke="#4c58a2" stroke-width="1.70"/>
<line x1="516.7" y1="583.6" x2="620.0" y2="584.6" stroke="#4c58a2" stroke-width="1.70"/>
<line x1="513.7" y1="564.5" x2="611.7" y2="565.5" stroke="#4c58a2" stroke-width="1.70"/>
<line x1="511.0" y1="547.4" x2="604.2" y2="548.3" stroke="#4c58a2" stroke-width="1.70"/>
<line x1="508.7" y1="532.2" x2="597.6" y2="533.2" stroke="#4c58a2" stroke-width="1.70"/>
<line x1="507.0" y1="521.6" x2="593.0" y2="522.5" stroke="#4c58a2" stroke-width="1.70"/>
<line x1="632.9" y1="606.5" x2="591.4" y2="511.8" stroke="#5a6088" stroke-width="1.20"/>
<line x1="651.3" y1="606.6" x2="605.3" y2="511.9" stroke="#5a6088" stroke-width="1.20"/>
<line x1="669.7" y1="606.8" x2="619.3" y2="512.0" stroke="#5a6088" stroke-width="1.20"/>
<line x1="688.0" y1="606.9" x2="633.2" y2="512.1" stroke="#5a6088" stroke-width="1.20"/>
<line x1="706.4" y1="607.0" x2="647.1" y2="512.2" stroke="#5a6088" stroke-width="1.20"/>
<line x1="724.7" y1="607.1" x2="661.0" y2="512.3" stroke="#5a6088" stroke-width="1.20"/>
<line x1="743.1" y1="607.3" x2="675.0" y2="512.4" stroke="#5a6088" stroke-width="1.20"/>
<line x1="761.4" y1="607.4" x2="688.9" y2="512.5" stroke="#5a6088" stroke-width="1.20"/>
<line x1="779.7" y1="607.5" x2="702.8" y2="512.6" stroke="#5a6088" stroke-width="1.20"/>
<line x1="798.0" y1="607.7" x2="716.7" y2="512.7" stroke="#5a6088" stroke-width="1.20"/>
<line x1="816.3" y1="607.8" x2="730.6" y2="512.8" stroke="#5a6088" stroke-width="1.20"/>
<line x1="834.6" y1="608.0" x2="744.5" y2="512.9" stroke="#5a6088" stroke-width="1.20"/>
<line x1="852.9" y1="608.1" x2="758.4" y2="513.0" stroke="#5a6088" stroke-width="1.20"/>
<line x1="871.2" y1="608.3" x2="772.2" y2="513.1" stroke="#5a6088" stroke-width="1.20"/>
<line x1="889.5" y1="608.4" x2="786.1" y2="513.3" stroke="#5a6088" stroke-width="1.20"/>
<line x1="907.8" y1="608.6" x2="800.0" y2="513.4" stroke="#5a6088" stroke-width="1.20"/>
<line x1="631.3" y1="610.6" x2="906.6" y2="613.3" stroke="#4c58a2" stroke-width="1.70"/>
<line x1="621.0" y1="586.9" x2="879.9" y2="589.5" stroke="#4c58a2" stroke-width="1.70"/>
<line x1="611.9" y1="565.9" x2="856.2" y2="568.4" stroke="#4c58a2" stroke-width="1.70"/>
<line x1="603.7" y1="547.2" x2="835.0" y2="549.5" stroke="#4c58a2" stroke-width="1.70"/>
<line x1="596.4" y1="530.3" x2="816.0" y2="532.6" stroke="#4c58a2" stroke-width="1.70"/>
<line x1="589.7" y1="515.1" x2="798.8" y2="517.3" stroke="#4c58a2" stroke-width="1.70"/>
<line x1="19.7" y1="601.4" x2="126.3" y2="507.6" stroke="#3e4ca6" stroke-width="2.00"/>
<line x1="38.4" y1="601.6" x2="140.5" y2="507.7" stroke="#3e4ca6" stroke-width="2.00"/>
<line x1="57.0" y1="601.7" x2="154.6" y2="507.9" stroke="#3e4ca6" stroke-width="2.00"/>
<line x1="75.7" y1="601.9" x2="168.7" y2="508.0" stroke="#3e4ca6" stroke-width="2.00"/>
<line x1="94.3" y1="602.1" x2="182.8" y2="508.2" stroke="#3e4ca6" stroke-width="2.00"/>
<line x1="112.9" y1="602.3" x2="196.9" y2="508.3" stroke="#3e4ca6" stroke-width="2.00"/>
<line x1="131.5" y1="602.5" x2="211.0" y2="508.5" stroke="#3e4ca6" stroke-width="2.00"/>
<line x1="150.1" y1="602.6" x2="225.0" y2="508.6" stroke="#3e4ca6" stroke-width="2.00"/>
<line x1="168.7" y1="602.8" x2="239.1" y2="508.8" stroke="#3e4ca6" stroke-width="2.00"/>
<line x1="187.3" y1="603.0" x2="253.2" y2="508.9" stroke="#3e4ca6" stroke-width="2.00"/>
<line x1="205.9" y1="603.2" x2="267.3" y2="509.1" stroke="#3e4ca6" stroke-width="2.00"/>
<line x1="224.5" y1="603.4" x2="281.3" y2="509.2" stroke="#3e4ca6" stroke-width="2.00"/>
<line x1="243.1" y1="603.5" x2="295.4" y2="509.4" stroke="#3e4ca6" stroke-width="2.00"/>
<line x1="261.6" y1="603.7" x2="309.5" y2="509.5" stroke="#3e4ca6" stroke-width="2.00"/>
<line x1="280.2" y1="603.9" x2="323.5" y2="509.7" stroke="#3e4ca6" stroke-width="2.00"/>
<line x1="298.7" y1="604.1" x2="337.6" y2="509.8" stroke="#3e4ca6" stroke-width="2.00"/>
<line x1="19.7" y1="601.4" x2="298.7" y2="604.1" stroke="#3e4ca6" stroke-width="2.00"/>
<line x1="46.2" y1="578.1" x2="308.4" y2="580.7" stroke="#3e4ca6" stroke-width="2.00"/>
<line x1="69.6" y1="557.5" x2="316.9" y2="560.0" stroke="#3e4ca6" stroke-width="2.00"/>
<line x1="90.6" y1="539.1" x2="324.5" y2="541.5" stroke="#3e4ca6" stroke-width="2.00"/>
<line x1="109.4" y1="522.5" x2="331.4" y2="524.8" stroke="#3e4ca6" stroke-width="2.00"/>
<line x1="126.3" y1="507.6" x2="337.6" y2="509.8" stroke="#3e4ca6" stroke-width="2.00"/>
<line x1="302.5" y1="595.0" x2="337.6" y2="509.8" stroke="#3e4ca6" stroke-width="2.00"/>
<line x1="320.6" y1="595.1" x2="351.6" y2="510.0" stroke="#3e4ca6" stroke-width="2.00"/>
<line x1="338.7" y1="595.3" x2="365.7" y2="510.1" stroke="#3e4ca6" stroke-width="2.00"/>
<line x1="356.8" y1="595.5" x2="379.7" y2="510.3" stroke="#3e4ca6" stroke-width="2.00"/>
<line x1="374.9" y1="595.7" x2="393.7" y2="510.4" stroke="#3e4ca6" stroke-width="2.00"/>
<line x1="392.9" y1="595.9" x2="407.8" y2="510.6" stroke="#3e4ca6" stroke-width="2.00"/>
<line x1="411.0" y1="596.0" x2="421.8" y2="510.7" stroke="#3e4ca6" stroke-width="2.00"/>
<line x1="302.5" y1="595.0" x2="411.0" y2="596.0" stroke="#3e4ca6" stroke-width="2.00"/>
<line x1="308.4" y1="580.7" x2="412.8" y2="581.7" stroke="#3e4ca6" stroke-width="2.00"/>
<line x1="316.9" y1="560.0" x2="415.4" y2="561.0" stroke="#3e4ca6" stroke-width="2.00"/>
<line x1="324.5" y1="541.5" x2="417.8" y2="542.4" stroke="#3e4ca6" stroke-width="2.00"/>
<line x1="331.4" y1="524.8" x2="419.9" y2="525.8" stroke="#3e4ca6" stroke-width="2.00"/>
<line x1="337.6" y1="509.8" x2="421.8" y2="510.7" stroke="#3e4ca6" stroke-width="2.00"/>
<line x1="409.9" y1="605.1" x2="421.8" y2="510.7" stroke="#3e4ca6" stroke-width="2.00"/>
<line x1="428.4" y1="605.3" x2="435.8" y2="510.9" stroke="#3e4ca6" stroke-width="2.00"/>
<line x1="446.8" y1="605.5" x2="449.8" y2="511.0" stroke="#3e4ca6" stroke-width="2.00"/>
<line x1="465.3" y1="605.7" x2="463.8" y2="511.2" stroke="#3e4ca6" stroke-width="2.00"/>
<line x1="483.8" y1="605.8" x2="477.8" y2="511.3" stroke="#3e4ca6" stroke-width="2.00"/>
<line x1="502.3" y1="606.0" x2="491.8" y2="511.5" stroke="#3e4ca6" stroke-width="2.00"/>
<line x1="520.7" y1="606.2" x2="505.8" y2="511.6" stroke="#3e4ca6" stroke-width="2.00"/>
<line x1="409.9" y1="605.1" x2="520.7" y2="606.2" stroke="#3e4ca6" stroke-width="2.00"/>
<line x1="412.8" y1="581.7" x2="517.0" y2="582.7" stroke="#3e4ca6" stroke-width="2.00"/>
<line x1="415.4" y1="561.0" x2="513.8" y2="562.0" stroke="#3e4ca6" stroke-width="2.00"/>
<line x1="417.8" y1="542.4" x2="510.8" y2="543.4" stroke="#3e4ca6" stroke-width="2.00"/>
<line x1="419.9" y1="525.8" x2="508.2" y2="526.7" stroke="#3e4ca6" stroke-width="2.00"/>
<line x1="421.8" y1="510.7" x2="505.8" y2="511.6" stroke="#3e4ca6" stroke-width="2.00"/>
<line x1="519.0" y1="595.5" x2="507.0" y2="518.9" stroke="#3e4ca6" stroke-width="2.00"/>
<line x1="537.0" y1="595.7" x2="521.3" y2="519.1" stroke="#3e4ca6" stroke-width="2.00"/>
<line x1="554.9" y1="595.8" x2="535.7" y2="519.2" stroke="#3e4ca6" stroke-width="2.00"/>
<line x1="572.8" y1="596.0" x2="550.0" y2="519.4" stroke="#3e4ca6" stroke-width="2.00"/>
<line x1="590.8" y1="596.2" x2="564.3" y2="519.6" stroke="#3e4ca6" stroke-width="2.00"/>
<line x1="608.7" y1="596.3" x2="578.6" y2="519.7" stroke="#3e4ca6" stroke-width="2.00"/>
<line x1="626.6" y1="596.5" x2="593.0" y2="519.9" stroke="#3e4ca6" stroke-width="2.00"/>
<line x1="519.0" y1="595.5" x2="626.6" y2="596.5" stroke="#3e4ca6" stroke-width="2.00"/>
<line x1="516.7" y1="580.5" x2="620.0" y2="581.5" stroke="#3e4ca6" stroke-width="2.00"/>
<line x1="513.7" y1="561.5" x2="611.7" y2="562.5" stroke="#3e4ca6" stroke-width="2.00"/>
<line x1="511.0" y1="544.5" x2="604.2" y2="545.5" stroke="#3e4ca6" stroke-width="2.00"/>
<line x1="508.7" y1="529.5" x2="597.6" y2="530.5" stroke="#3e4ca6" stroke-width="2.00"/>
<line x1="507.0" y1="518.9" x2="593.0" y2="519.9" stroke="#3e4ca6" stroke-width="2.00"/>
<line x1="631.3" y1="607.3" x2="589.7" y2="512.5" stroke="#3e4ca6" stroke-width="2.00"/>
<line x1="649.7" y1="607.4" x2="603.7" y2="512.7" stroke="#3e4ca6" stroke-width="2.00"/>
<line x1="668.1" y1="607.6" x2="617.7" y2="512.8" stroke="#3e4ca6" stroke-width="2.00"/>
<line x1="686.5" y1="607.8" x2="631.6" y2="513.0" stroke="#3e4ca6" stroke-width="2.00"/>
<line x1="704.9" y1="608.0" x2="645.6" y2="513.1" stroke="#3e4ca6" stroke-width="2.00"/>
<line x1="723.2" y1="608.1" x2="659.5" y2="513.3" stroke="#3e4ca6" stroke-width="2.00"/>
<line x1="741.6" y1="608.3" x2="673.5" y2="513.4" stroke="#3e4ca6" stroke-width="2.00"/>
<line x1="760.0" y1="608.5" x2="687.4" y2="513.6" stroke="#3e4ca6" stroke-width="2.00"/>
<line x1="778.3" y1="608.7" x2="701.4" y2="513.7" stroke="#3e4ca6" stroke-width="2.00"/>
<line x1="796.7" y1="608.8" x2="715.3" y2="513.8" stroke="#3e4ca6" stroke-width="2.00"/>
<line x1="815.0" y1="609.0" x2="729.2" y2="514.0" stroke="#3e4ca6" stroke-width="2.00"/>
<line x1="833.3" y1="609.2" x2="743.2" y2="514.1" stroke="#3e4ca6" stroke-width="2.00"/>
<line x1="851.6" y1="609.4" x2="757.1" y2="514.3" stroke="#3e4ca6" stroke-width="2.00"/>
<line x1="870.0" y1="609.6" x2="771.0" y2="514.4" stroke="#3e4ca6" stroke-width="2.00"/>
<line x1="888.3" y1="609.7" x2="784.9" y2="514.6" stroke="#3e4ca6" stroke-width="2.00"/>
<line x1="906.6" y1="609.9" x2="798.8" y2="514.7" stroke="#3e4ca6" stroke-width="2.00"/>
<line x1="631.3" y1="607.3" x2="906.6" y2="609.9" stroke="#3e4ca6" stroke-width="2.00"/>
<line x1="621.0" y1="583.8" x2="879.9" y2="586.3" stroke="#3e4ca6" stroke-width="2.00"/>
<line x1="611.9" y1="562.9" x2="856.2" y2="565.4" stroke="#3e4ca6" stroke-width="2.00"/>
<line x1="603.7" y1="544.3" x2="835.0" y2="546.7" stroke="#3e4ca6" stroke-width="2.00"/>
<line x1="596.4" y1="527.6" x2="816.0" y2="529.9" stroke="#3e4ca6" stroke-width="2.00"/>
<line x1="589.7" y1="512.5" x2="798.8" y2="514.7" stroke="#3e4ca6" stroke-width="2.00"/>
<polygon points="126.3,507.6 337.6,509.8 298.7,604.1 19.7,601.4" fill="none" stroke="#2c3678" stroke-width="1.6" stroke-linejoin="round"/>
<polygon points="337.6,509.8 421.8,510.7 411.0,596.0 302.5,595.0" fill="none" stroke="#2c3678" stroke-width="1.6" stroke-linejoin="round"/>
<polygon points="421.8,510.7 505.8,511.6 520.7,606.2 409.9,605.1" fill="none" stroke="#2c3678" stroke-width="1.6" stroke-linejoin="round"/>
<polygon points="507.0,518.9 593.0,519.9 626.6,596.5 519.0,595.5" fill="none" stroke="#2c3678" stroke-width="1.6" stroke-linejoin="round"/>
<polygon points="589.7,512.5 798.8,514.7 906.6,609.9 631.3,607.3" fill="none" stroke="#2c3678" stroke-width="1.6" stroke-linejoin="round"/>
<text x="787.5" y="537" font-family="Liberation Sans" font-size="16.5" fill="#1e1e1e" letter-spacing="-0.5">Joint</text>
</svg>
</body></html>
